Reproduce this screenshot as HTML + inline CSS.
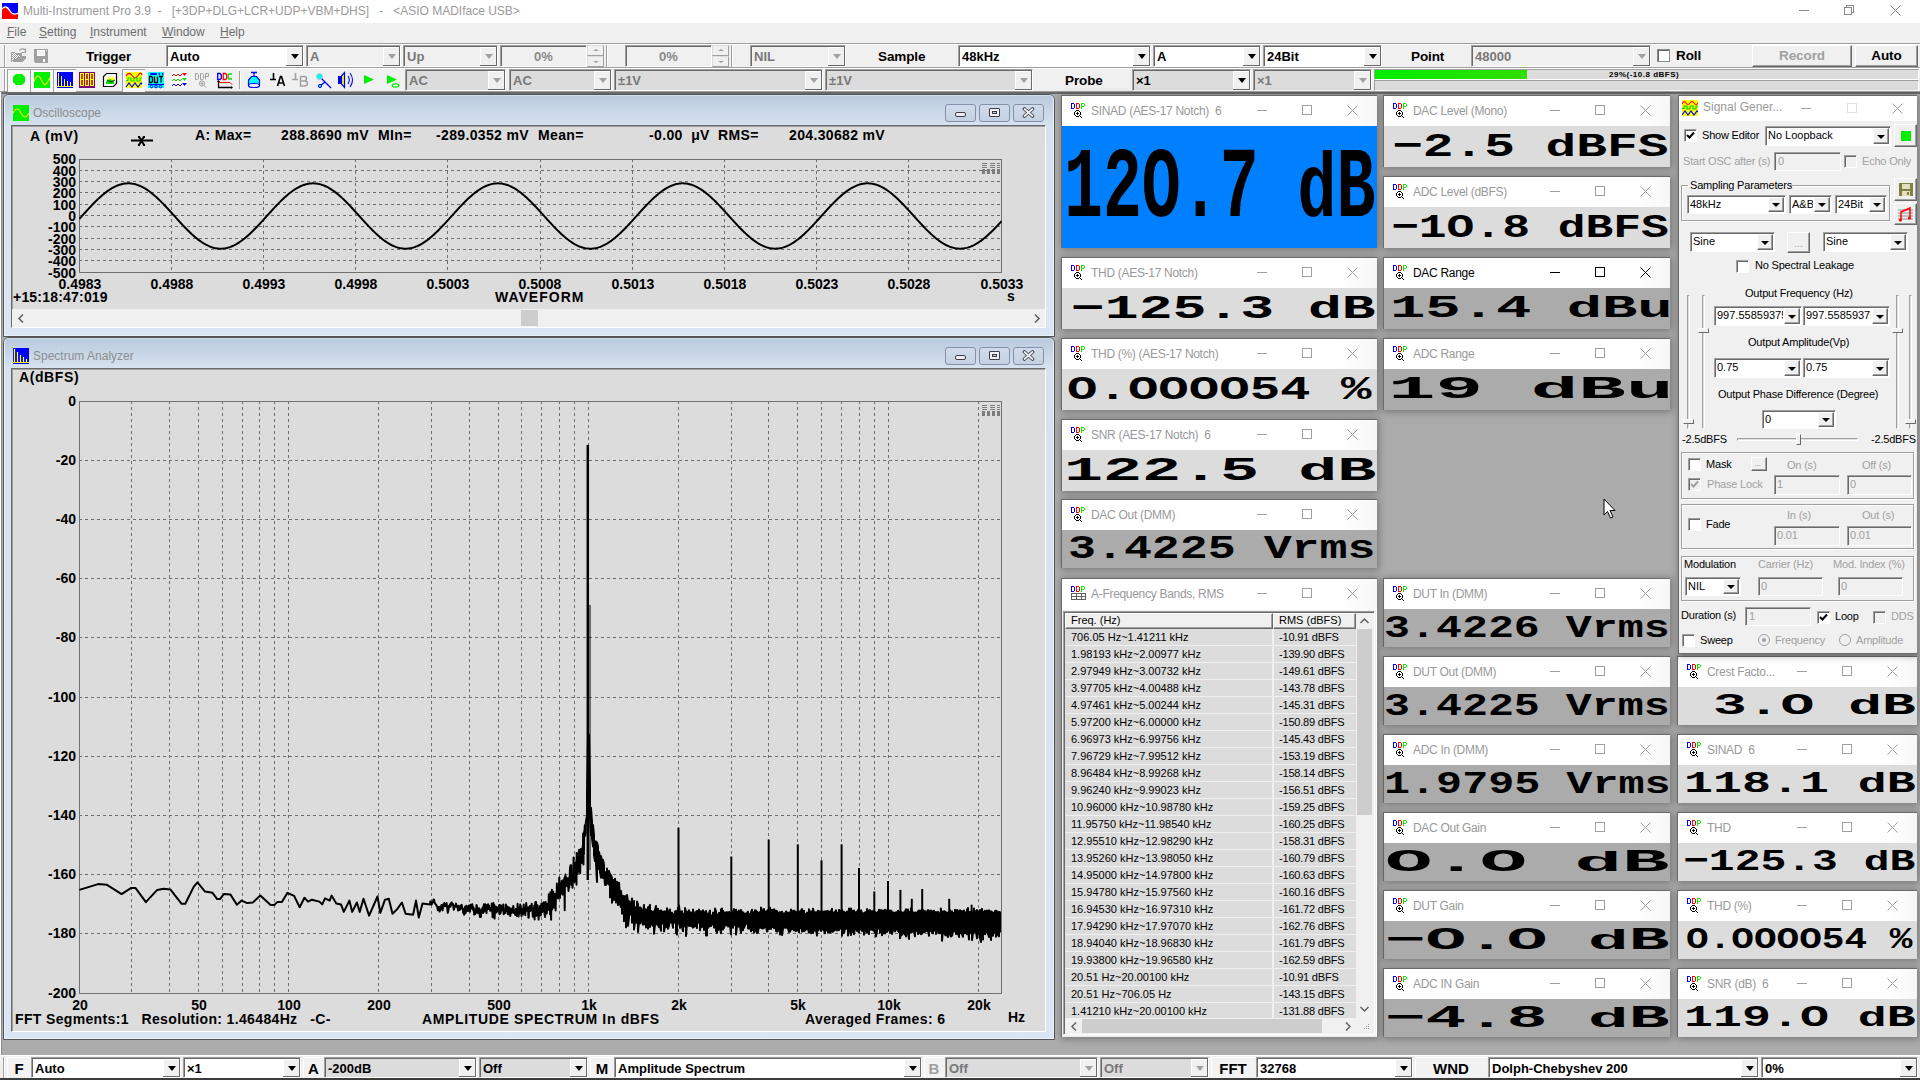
<!DOCTYPE html><html><head><meta charset="utf-8"><style>
*{box-sizing:border-box;margin:0;padding:0}
html,body{width:1920px;height:1080px;overflow:hidden;background:#ababab;font-family:"Liberation Sans",sans-serif;}
.abs{position:absolute}
.t{position:absolute;white-space:nowrap;line-height:1}
.b{font-weight:bold}
.cb{position:absolute;background:#fff;border-top:1px solid #a0a0a0;border-left:1px solid #a0a0a0;border-bottom:1px solid #fff;border-right:1px solid #fff;box-shadow:inset 1px 1px 0 #696969}
.cbg{background:#dcdcdc}
.arr{position:absolute;top:1px;bottom:0;right:0;width:17px;background:#f0f0f0;border-right:1px solid #696969;border-bottom:1px solid #696969;box-shadow:inset 1px 1px 0 #fff}
.arr:after{content:"";position:absolute;left:4.5px;top:50%;margin-top:-2px;border-left:4px solid transparent;border-right:4px solid transparent;border-top:5px solid #000}
.arr.dis:after{border-top-color:#a0a0a0}
.cbt{position:absolute;left:3px;top:50%;transform:translateY(-50%);font-size:13px;font-weight:bold;white-space:nowrap}
</style></head><body><div class="abs" style="left:0;top:0;width:1920px;height:23px;background:#fff"></div><svg class="abs" style="left:2px;top:3px" width="16" height="16" viewBox="0 0 16 16"><rect width="16" height="16" fill="#0000ff"/><path d="M0 16 L0 6 Q4 1 8 8 Q11 13 16 10 L16 16Z" fill="#ff0000"/><path d="M0 6 Q4 1 8 8 Q11 13 16 10" stroke="#fff" stroke-width="1.3" fill="none"/></svg><div class="t" style="left:23px;top:5px;font-size:12px;color:#9a9a9a">Multi-Instrument Pro 3.9&nbsp;&nbsp;-&nbsp;&nbsp;&nbsp;[+3DP+DLG+LCR+UDP+VBM+DHS]&nbsp;&nbsp;&nbsp;-&nbsp;&nbsp;&nbsp;&lt;ASIO MADIface USB&gt;</div><div class="abs" style="left:1799px;top:10px;width:10px;height:1px;background:#8a8a8a"></div><svg class="abs" style="left:1844px;top:5px" width="12" height="12" shape-rendering="crispEdges"><rect x="0.5" y="2.5" width="7" height="7" fill="none" stroke="#8a8a8a"/><path d="M2.5 2.5 V0.5 H9.5 V7.5 H7.5" fill="none" stroke="#8a8a8a"/></svg><svg class="abs" style="left:1890px;top:5px" width="12" height="12"><path d="M0.5 0.5 L10.5 10.5 M10.5 0.5 L0.5 10.5" stroke="#8a8a8a" stroke-width="1"/></svg><div class="abs" style="left:0;top:23px;width:1920px;height:20px;background:#f0f0f0"></div><div class="t" style="left:7px;top:26px;font-size:12px;color:#6d6d6d"><u>F</u>ile</div><div class="t" style="left:39px;top:26px;font-size:12px;color:#6d6d6d"><u>S</u>etting</div><div class="t" style="left:90px;top:26px;font-size:12px;color:#6d6d6d"><u>I</u>nstrument</div><div class="t" style="left:162px;top:26px;font-size:12px;color:#6d6d6d"><u>W</u>indow</div><div class="t" style="left:220px;top:26px;font-size:12px;color:#6d6d6d"><u>H</u>elp</div><div class="abs" style="left:0;top:43px;width:1920px;height:49px;background:#f0f0f0"></div><div class="abs" style="left:0;top:43px;width:1920px;height:1px;background:#a0a0a0"></div><div class="abs" style="left:0;top:44px;width:1920px;height:1px;background:#fff"></div><div class="abs" style="left:0;top:67px;width:1920px;height:1px;background:#a0a0a0"></div><div class="abs" style="left:0;top:68px;width:1920px;height:1px;background:#fff"></div><div class="abs" style="left:0;top:91px;width:1920px;height:1px;background:#a0a0a0"></div><div class="abs" style="left:0;top:92px;width:1920px;height:2px;background:#696969"></div><div class="abs" style="left:4px;top:45px;width:2px;height:22px;border-left:1px solid #a0a0a0;border-right:1px solid #fff"></div><div class="abs" style="left:4px;top:69px;width:2px;height:22px;border-left:1px solid #a0a0a0;border-right:1px solid #fff"></div><svg class="abs" style="left:0;top:42px" width="60" height="26" viewBox="0 42 60 26" shape-rendering="crispEdges"><path d="M11 52 H15 V53 H22 V56 H26 V58 L22 62 H11Z" fill="#a0a0a0"/><rect x="12" y="53" width="1" height="1" fill="#fff"/><rect x="14" y="53" width="1" height="1" fill="#fff"/><rect x="13" y="54" width="1" height="1" fill="#fff"/><rect x="15" y="54" width="1" height="1" fill="#fff"/><rect x="12" y="55" width="1" height="1" fill="#fff"/><rect x="14" y="55" width="1" height="1" fill="#fff"/><rect x="16" y="55" width="1" height="1" fill="#fff"/><rect x="18" y="55" width="1" height="1" fill="#fff"/><rect x="13" y="56" width="1" height="1" fill="#fff"/><rect x="15" y="56" width="1" height="1" fill="#fff"/><rect x="17" y="56" width="1" height="1" fill="#fff"/><rect x="19" y="56" width="1" height="1" fill="#fff"/><rect x="12" y="57" width="1" height="1" fill="#fff"/><rect x="14" y="57" width="1" height="1" fill="#fff"/><rect x="16" y="57" width="1" height="1" fill="#fff"/><rect x="12" y="59" width="1" height="1" fill="#fff"/><rect x="13" y="58" width="1" height="1" fill="#fff"/><rect x="15" y="58" width="1" height="1" fill="#fff"/><rect x="12" y="61" width="1" height="1" fill="#fff"/><path d="M19.5 50.5 Q22 47.5 25 50 M25.5 48.5 V52.5 H21.5" stroke="#a0a0a0" fill="none" stroke-width="1.2" shape-rendering="auto"/><path d="M34 49 H48 V63 H35 L34 62Z" fill="#a0a0a0"/><rect x="37" y="50" width="8" height="6" fill="#fff"/><rect x="38" y="51" width="6" height="4" fill="#f0f0f0"/><rect x="43" y="59" width="2" height="3" fill="#fff"/><rect x="46" y="50" width="1" height="1" fill="#fff"/></svg><div class="t b" style="left:86px;top:50px;font-size:13.5px;letter-spacing:-0.1px;color:#000">Trigger</div><div class="cb" style="left:166px;top:45px;width:138px;height:22px;background:#fff"><div class="cbt" style="color:#000;font-weight:bold;font-size:13px">Auto</div><div class="arr"></div></div><div class="cb" style="left:306px;top:45px;width:95px;height:22px;background:#f0f0f0"><div class="cbt" style="color:#787878;font-weight:bold;font-size:13px">A</div><div class="arr dis"></div></div><div class="cb" style="left:403px;top:45px;width:95px;height:22px;background:#f0f0f0"><div class="cbt" style="color:#787878;font-weight:bold;font-size:13px">Up</div><div class="arr dis"></div></div><div class="cb" style="left:500px;top:45px;width:87px;height:22px;background:#f0f0f0"><div class="t b" style="left:0;width:85px;text-align:center;top:4px;font-size:13px;color:#8a8a8a">0%</div></div><div class="abs" style="left:587px;top:45px;width:17px;height:11px;background:#f0f0f0;border:1px solid #dcdcdc;border-right-color:#a0a0a0;border-bottom-color:#a0a0a0"></div><div class="abs" style="left:587px;top:56px;width:17px;height:11px;background:#f0f0f0;border:1px solid #dcdcdc;border-right-color:#a0a0a0;border-bottom-color:#a0a0a0"></div><div class="abs" style="left:593px;top:49px;border-left:3px solid transparent;border-right:3px solid transparent;border-bottom:2px solid #a0a0a0"></div><div class="abs" style="left:593px;top:61px;border-left:3px solid transparent;border-right:3px solid transparent;border-top:2px solid #a0a0a0"></div><div class="abs" style="left:606px;top:45px;width:2px;height:22px;border-left:1px solid #a0a0a0;border-right:1px solid #fff"></div><div class="cb" style="left:625px;top:45px;width:87px;height:22px;background:#f0f0f0"><div class="t b" style="left:0;width:85px;text-align:center;top:4px;font-size:13px;color:#8a8a8a">0%</div></div><div class="abs" style="left:712px;top:45px;width:17px;height:11px;background:#f0f0f0;border:1px solid #dcdcdc;border-right-color:#a0a0a0;border-bottom-color:#a0a0a0"></div><div class="abs" style="left:712px;top:56px;width:17px;height:11px;background:#f0f0f0;border:1px solid #dcdcdc;border-right-color:#a0a0a0;border-bottom-color:#a0a0a0"></div><div class="abs" style="left:718px;top:49px;border-left:3px solid transparent;border-right:3px solid transparent;border-bottom:2px solid #a0a0a0"></div><div class="abs" style="left:718px;top:61px;border-left:3px solid transparent;border-right:3px solid transparent;border-top:2px solid #a0a0a0"></div><div class="abs" style="left:731px;top:45px;width:2px;height:22px;border-left:1px solid #a0a0a0;border-right:1px solid #fff"></div><div class="cb" style="left:750px;top:45px;width:96px;height:22px;background:#f0f0f0"><div class="cbt" style="color:#787878;font-weight:bold;font-size:13px">NIL</div><div class="arr dis"></div></div><div class="t b" style="left:878px;top:50px;font-size:13.5px;letter-spacing:-0.1px">Sample</div><div class="cb" style="left:958px;top:45px;width:193px;height:22px;background:#fff"><div class="cbt" style="color:#000;font-weight:bold;font-size:13px">48kHz</div><div class="arr"></div></div><div class="cb" style="left:1153px;top:45px;width:108px;height:22px;background:#fff"><div class="cbt" style="color:#000;font-weight:bold;font-size:13px">A</div><div class="arr"></div></div><div class="cb" style="left:1263px;top:45px;width:119px;height:22px;background:#fff"><div class="cbt" style="color:#000;font-weight:bold;font-size:13px">24Bit</div><div class="arr"></div></div><div class="t b" style="left:1411px;top:50px;font-size:13.5px;letter-spacing:-0.1px">Point</div><div class="cb" style="left:1471px;top:45px;width:180px;height:22px;background:#f0f0f0"><div class="cbt" style="color:#787878;font-weight:bold;font-size:13px">48000</div><div class="arr dis"></div></div><div class="abs" style="left:1657px;top:49px;width:13px;height:13px;background:#fff;border:1px solid #8a8a8a;box-shadow:inset 1px 1px 0 #696969"></div><div class="t b" style="left:1676px;top:49px;font-size:13.5px;letter-spacing:-0.1px">Roll</div><div class="abs" style="left:1752px;top:45px;width:100px;height:22px;background:#f0f0f0;border:1px solid #fff;border-right-color:#696969;border-bottom-color:#696969;box-shadow:inset -1px -1px 0 #a0a0a0"></div><div class="t b" style="left:1752px;width:100px;text-align:center;top:49px;font-size:13.5px;letter-spacing:-0.1px;color:#a0a0a0">Record</div><div class="abs" style="left:1855px;top:45px;width:63px;height:22px;background:#f0f0f0;border:1px solid #fff;border-right-color:#696969;border-bottom-color:#696969;box-shadow:inset -1px -1px 0 #a0a0a0"></div><div class="t b" style="left:1855px;width:63px;text-align:center;top:49px;font-size:13.5px;letter-spacing:-0.1px;color:#000">Auto</div><div class="abs" style="left:7px;top:69px;width:23px;height:23px;background:#f7f7f7;border-left:1px solid #a0a0a0;border-top:1px solid #a0a0a0"></div><div class="abs" style="left:30px;top:69px;width:23px;height:23px;background:#f7f7f7;border-left:1px solid #a0a0a0;border-top:1px solid #a0a0a0"></div><div class="abs" style="left:53px;top:69px;width:23px;height:23px;background:#f7f7f7;border-left:1px solid #a0a0a0;border-top:1px solid #a0a0a0"></div><div class="abs" style="left:122px;top:69px;width:23px;height:23px;background:#f7f7f7;border-left:1px solid #a0a0a0;border-top:1px solid #a0a0a0"></div><svg class="abs" style="left:0;top:66px" width="410" height="28" viewBox="0 66 410 28"><polygon points="16,74 22,74 25,77 25,82 22,85 16,85 13,82 13,77" fill="#00ee00"/><rect x="34" y="72" width="16" height="16" fill="#00ee00"/><polyline points="34.0,81.16 34.5,80.20 35.0,79.24 35.5,78.33 36.0,77.52 36.5,76.84 37.0,76.33 37.5,76.01 38.0,75.90 38.5,76.01 39.0,76.33 39.5,76.84 40.0,77.52 40.5,78.34 41.0,79.24 41.5,80.20 42.0,81.16 42.5,82.07 43.0,82.88 43.5,83.56 44.0,84.07 44.5,84.39 45.0,84.50 45.5,84.39 46.0,84.07 46.5,83.56 47.0,82.88 47.5,82.06 48.0,81.16 48.5,80.20 49.0,79.24 49.5,78.33 50.0,77.52" fill="none" stroke="#eeee00" stroke-width="1.1"/><rect x="57" y="72" width="16" height="16" fill="#0000ff"/><g fill="#ffff00"><rect x="58" y="73" width="1" height="13"/><rect x="61" y="76" width="1" height="10"/><rect x="64" y="79" width="1" height="7"/><rect x="67" y="81" width="1" height="5"/><rect x="70" y="82" width="1" height="4"/><rect x="57" y="86" width="16" height="1"/></g><rect x="79" y="72" width="16" height="16" fill="#800080"/><g fill="none" stroke="#ffff00" stroke-width="1"><rect x="80.5" y="73.5" width="3" height="6"/><rect x="80.5" y="79.5" width="3" height="6"/></g><rect x="81" y="74" width="2" height="5" fill="#c04000"/><rect x="81" y="80" width="2" height="5" fill="#c04000"/><g fill="none" stroke="#ffff00" stroke-width="1"><rect x="85.5" y="73.5" width="3" height="6"/><rect x="85.5" y="79.5" width="3" height="6"/></g><rect x="86" y="74" width="2" height="5" fill="#c04000"/><rect x="86" y="80" width="2" height="5" fill="#c04000"/><g fill="none" stroke="#ffff00" stroke-width="1"><rect x="90.5" y="73.5" width="3" height="6"/><rect x="90.5" y="79.5" width="3" height="6"/></g><rect x="91" y="74" width="2" height="5" fill="#c04000"/><rect x="91" y="80" width="2" height="5" fill="#c04000"/><path d="M106.5 73.5 H116.5 V83.5 L113.5 86.5 H103.5 V76.5Z" fill="#fff" stroke="#000" stroke-width="1.2"/><path d="M107 80 L109 76 L111 79 L113 76 L115 80 L111 82Z" fill="#ffff00"/><path d="M106 84 V81 L110 79 L114 81 V84Z" fill="#00dd00"/><path d="M107 80 L111 82 L115 80" stroke="#000" fill="none" stroke-width="0.8"/><rect x="126" y="72" width="16" height="16" fill="#ffff00"/><path d="M126 76 Q129 71 132 75.5 T138 75.5 T142 75" stroke="#ff0000" stroke-width="1.2" fill="none"/><path d="M126 80.5 H128 V78 H131 V81 H134 V78 H137 V81 H140 V78 H142" stroke="#00dd00" stroke-width="1.2" fill="none"/><path d="M126 87 L129 83 L132 87 L135 83 L138 87 L141 83 L142 84" stroke="#0000ff" stroke-width="1.2" fill="none"/><rect x="148" y="72" width="16" height="16" fill="#00ffff"/><rect x="150" y="73" width="7" height="2" rx="1" fill="#0000ff"/><path d="M158 74 L160 72.5 V75.5Z M164 74 L162 72.5 V75.5Z" fill="#0000ff"/><path d="M149.5 76.5 V82.5 H151.5 L152.5 81.5 V77.5 L151.5 76.5Z M154.5 76.5 V82.5 H157.5 V76.5 M159 76.5 H163 M161 76.5 V82.5" stroke="#000" stroke-width="1.3" fill="none"/><rect x="148" y="84" width="16" height="1" fill="#0000ff"/><g fill="none" stroke="#0000ff" stroke-width="1"><ellipse cx="151.5" cy="86.5" rx="1.3" ry="1.3"/><ellipse cx="156" cy="86.5" rx="1.3" ry="1.3"/><ellipse cx="160.5" cy="86.5" rx="1.3" ry="1.3"/></g><rect x="171" y="72" width="16" height="16" fill="#fff"/><path d="M172 76 L174 74 L176 76 L178 74 L180 76 L182 74" stroke="#ff0000" fill="none" stroke-width="1"/><path d="M182 73 H187 L184.5 76Z" fill="#ff0000"/><path d="M172 81 L174 79 L176 81 L178 79 L180 81 L182 79" stroke="#00dd00" fill="none" stroke-width="1"/><path d="M182 78 H187 L184.5 81Z" fill="#00dd00"/><path d="M172 86 L174 84 L176 86 L178 84 L180 86 L182 84" stroke="#0000ff" fill="none" stroke-width="1"/><path d="M182 83 H187 L184.5 86Z" fill="#0000ff"/><g fill="none" stroke="#a0a0a0" stroke-width="1"><path d="M195.5 73.5 H197.5 L198.5 74.5 V78.5 L197.5 79.5 H195.5Z M200.5 73.5 H202.5 L203.5 74.5 V78.5 L202.5 79.5 H200.5Z M205.5 79.5 V73.5 H208.5 V76.5 H205.5"/><circle cx="202" cy="83.5" r="2.6"/><path d="M204 85.5 L206 87.5 M200.5 83.5 H203.5 M202 82 V85"/></g><g fill="none" stroke-width="1.3"><path d="M217.7 73.5 H220 L221.3 74.8 V78.2 L220 79.5 H217.7Z" stroke="#0000ff"/><path d="M223.2 73.5 H225.5 L226.8 74.8 V78.2 L225.5 79.5 H223.2Z" stroke="#ff0000"/><path d="M232 74 H229 L228.3 74.8 V78.2 L229 79 H232" stroke="#00dd00"/></g><path d="M218.5 81 V87.5 H231" stroke="#000" stroke-width="1.3" fill="none"/><path d="M217 82 L218.5 80 L220 82 Z M231 86 L233 87.5 L231 89Z" fill="#000"/><path d="M219 82.5 H230 L232 84.5" stroke="#ff0000" stroke-width="1" fill="none"/><rect x="239" y="71" width="1" height="18" fill="#a0a0a0"/><rect x="240" y="71" width="1" height="18" fill="#fff"/><path d="M251 72.5 H257 M254 72.5 V76" stroke="#0000ff" stroke-width="1.3"/><path d="M251.5 76.5 H256.5 L259.5 80 V85.5 H248.5 V80Z" fill="#00ffff" stroke="#0000ff" stroke-width="1.2"/><ellipse cx="254" cy="85.5" rx="5.5" ry="2" fill="#fff" stroke="#0000ff" stroke-width="1.2"/><path d="M270 79.5 H276 M273.5 73 V79.5" stroke="#000" stroke-width="1.6"/><path d="M277.5 86 L280.5 76.5 H281.5 L284.5 86 M278.5 83 H283.5" stroke="#000" stroke-width="1.6" fill="none"/><path d="M292 79.5 H298 M295.5 73 V79.5" stroke="#a0a0a0" stroke-width="1.6"/><path d="M300.5 76.5 H304.5 Q306.5 76.5 306.5 78.8 Q306.5 81 304.5 81 H300.5 M304.5 81 Q307.5 81 307.5 83.5 Q307.5 86 304.5 86 H300.5 V76.5" stroke="#a0a0a0" stroke-width="1.5" fill="none"/><path d="M320 77 L331 88 M325 82 L320 86" stroke="#0000ff" stroke-width="1.3"/><circle cx="319.5" cy="76.5" r="3" fill="#00ffff" stroke="#e0a0a0" stroke-width="0.6"/><circle cx="320" cy="86" r="1.6" fill="#00ffff" stroke="#0000ff" stroke-width="1"/><rect x="338" y="76" width="3" height="8" fill="#0000ff"/><path d="M341.5 76 L344.5 72.5 V87.5 L341.5 84Z" fill="#ffff00" stroke="#0000ff" stroke-width="1.2"/><path d="M348 76 Q350.5 80 348 84 M350 73 Q355 80 350 87" stroke="#0000ff" stroke-width="1.1" fill="none"/><path d="M364 75 L374 79.5 L364 84Z" fill="#00ee00"/><path d="M387 75 L397 79.5 L387 84Z" fill="#00ee00"/><ellipse cx="395.5" cy="85.5" rx="3.3" ry="1.6" fill="none" stroke="#00ee00" stroke-width="1.2"/></svg><div class="cb" style="left:405px;top:69px;width:101px;height:22px;background:#dcdcdc"><div class="cbt" style="color:#787878;font-weight:bold;font-size:13px">AC</div><div class="arr dis"></div></div><div class="cb" style="left:509px;top:69px;width:103px;height:22px;background:#dcdcdc"><div class="cbt" style="color:#787878;font-weight:bold;font-size:13px">AC</div><div class="arr dis"></div></div><div class="cb" style="left:614px;top:69px;width:209px;height:22px;background:#dcdcdc"><div class="cbt" style="color:#787878;font-weight:bold;font-size:13px">&plusmn;1V</div><div class="arr dis"></div></div><div class="cb" style="left:825px;top:69px;width:208px;height:22px;background:#dcdcdc"><div class="cbt" style="color:#787878;font-weight:bold;font-size:13px">&plusmn;1V</div><div class="arr dis"></div></div><div class="t b" style="left:1065px;top:74px;font-size:13.5px;letter-spacing:-0.1px">Probe</div><div class="cb" style="left:1132px;top:69px;width:119px;height:22px;background:#dcdcdc"><div class="cbt" style="color:#000;font-weight:bold;font-size:13px">&times;1</div><div class="arr"></div></div><div class="cb" style="left:1253px;top:69px;width:119px;height:22px;background:#dcdcdc"><div class="cbt" style="color:#787878;font-weight:bold;font-size:13px">&times;1</div><div class="arr dis"></div></div><div class="abs" style="left:1374px;top:69px;width:545px;height:11px;background:#dcdcdc;border:1px solid #a0a0a0;border-right-color:#fff;border-bottom-color:#fff"></div><div class="abs" style="left:1375px;top:70px;width:152px;height:9px;background:linear-gradient(90deg,#00ee00,#33dd00)"></div><div class="t b" style="left:1609px;top:71px;font-size:8px;letter-spacing:0.5px">29%(-10.8 dBFS)</div><div class="abs" style="left:1374px;top:80px;width:545px;height:11px;background:#dcdcdc;border:1px solid #a0a0a0;border-right-color:#fff;border-bottom-color:#fff"></div><div class="abs" style="left:0;top:92px;width:2px;height:963px;background:#8a8a8a;border-left:1px solid #fff"></div><div class="abs" style="left:3px;top:94px;width:1052px;height:243px;border:1px solid #555;border-radius:6px 6px 0 0;background:linear-gradient(180deg,#b9cadd 0px,#d6e2ef 30px,#dae6f3 100%)"></div><div class="abs" style="left:4px;top:95px;width:1050px;height:241px;border:1px solid #e8f0f8;border-top-color:#d0dde9;border-radius:5px 5px 0 0"></div><div class="abs" style="left:13px;top:105px;width:16px;height:16px"><svg width="16" height="16"><rect width="16" height="16" fill="#00ee00"/><path d="M0 8 Q4 0 8 8 T16 8" stroke="#eeee00" stroke-width="1.2" fill="none"/></svg></div><div class="t" style="left:33px;top:107px;font-size:12px;color:#8c8c8c">Oscilloscope</div><div class="abs" style="left:945px;top:104px;width:31px;height:18px;border:1px solid #8391a8;border-radius:3px;background:linear-gradient(180deg,#d0dceb,#c3d1e2)"></div><div class="abs" style="left:955px;top:112px;width:11px;height:5px;border-radius:2px;background:#eeeeee;border:1px solid #3c3c4c"></div><div class="abs" style="left:979px;top:104px;width:31px;height:18px;border:1px solid #8391a8;border-radius:3px;background:linear-gradient(180deg,#d0dceb,#c3d1e2)"></div><div class="abs" style="left:989px;top:108px;width:11px;height:9px;border-radius:1px;background:#f0f0f0;border:1px solid #3c3c4c"></div><div class="abs" style="left:992px;top:111px;width:5px;height:3px;background:#c0cedd;border:1px solid #3c3c4c"></div><div class="abs" style="left:1013px;top:104px;width:31px;height:18px;border:1px solid #8391a8;border-radius:3px;background:linear-gradient(180deg,#d0dceb,#c3d1e2)"></div><svg class="abs" style="left:1022px;top:107px" width="13" height="11"><path d="M2.5 2 L10.5 9 M10.5 2 L2.5 9" stroke="#3c3c4c" stroke-width="3.6" stroke-linecap="round"/><path d="M2.5 2 L10.5 9 M10.5 2 L2.5 9" stroke="#f0f0f0" stroke-width="1.8" stroke-linecap="round"/></svg><div class="abs" style="left:11px;top:125px;width:1035px;height:203px;background:#dcdcdc;border-top:1px solid #696969;border-left:1px solid #696969;border-right:1px solid #fff;border-bottom:1px solid #fff;box-shadow:inset 1px 1px 0 #a0a0a0"></div><svg class="abs" style="left:0;top:0" width="1060" height="340"><line x1="79.5" y1="170.5" x2="1001.5" y2="170.5" stroke="#6e6e6e" stroke-dasharray="3,3" stroke-dashoffset="1" stroke-width="1" shape-rendering="crispEdges"/><line x1="79.5" y1="181.5" x2="1001.5" y2="181.5" stroke="#6e6e6e" stroke-dasharray="3,3" stroke-dashoffset="1" stroke-width="1" shape-rendering="crispEdges"/><line x1="79.5" y1="192.5" x2="1001.5" y2="192.5" stroke="#6e6e6e" stroke-dasharray="3,3" stroke-dashoffset="1" stroke-width="1" shape-rendering="crispEdges"/><line x1="79.5" y1="204.5" x2="1001.5" y2="204.5" stroke="#6e6e6e" stroke-dasharray="3,3" stroke-dashoffset="1" stroke-width="1" shape-rendering="crispEdges"/><line x1="79.5" y1="215.5" x2="1001.5" y2="215.5" stroke="#6e6e6e" stroke-dasharray="3,3" stroke-dashoffset="1" stroke-width="1" shape-rendering="crispEdges"/><line x1="79.5" y1="226.5" x2="1001.5" y2="226.5" stroke="#6e6e6e" stroke-dasharray="3,3" stroke-dashoffset="1" stroke-width="1" shape-rendering="crispEdges"/><line x1="79.5" y1="238.5" x2="1001.5" y2="238.5" stroke="#6e6e6e" stroke-dasharray="3,3" stroke-dashoffset="1" stroke-width="1" shape-rendering="crispEdges"/><line x1="79.5" y1="249.5" x2="1001.5" y2="249.5" stroke="#6e6e6e" stroke-dasharray="3,3" stroke-dashoffset="1" stroke-width="1" shape-rendering="crispEdges"/><line x1="79.5" y1="260.5" x2="1001.5" y2="260.5" stroke="#6e6e6e" stroke-dasharray="3,3" stroke-dashoffset="1" stroke-width="1" shape-rendering="crispEdges"/><line x1="171.5" y1="159.5" x2="171.5" y2="272.5" stroke="#6e6e6e" stroke-dasharray="3,3" stroke-dashoffset="1" stroke-width="1" shape-rendering="crispEdges"/><line x1="263.5" y1="159.5" x2="263.5" y2="272.5" stroke="#6e6e6e" stroke-dasharray="3,3" stroke-dashoffset="1" stroke-width="1" shape-rendering="crispEdges"/><line x1="355.5" y1="159.5" x2="355.5" y2="272.5" stroke="#6e6e6e" stroke-dasharray="3,3" stroke-dashoffset="1" stroke-width="1" shape-rendering="crispEdges"/><line x1="447.5" y1="159.5" x2="447.5" y2="272.5" stroke="#6e6e6e" stroke-dasharray="3,3" stroke-dashoffset="1" stroke-width="1" shape-rendering="crispEdges"/><line x1="540.5" y1="159.5" x2="540.5" y2="272.5" stroke="#6e6e6e" stroke-dasharray="3,3" stroke-dashoffset="1" stroke-width="1" shape-rendering="crispEdges"/><line x1="632.5" y1="159.5" x2="632.5" y2="272.5" stroke="#6e6e6e" stroke-dasharray="3,3" stroke-dashoffset="1" stroke-width="1" shape-rendering="crispEdges"/><line x1="724.5" y1="159.5" x2="724.5" y2="272.5" stroke="#6e6e6e" stroke-dasharray="3,3" stroke-dashoffset="1" stroke-width="1" shape-rendering="crispEdges"/><line x1="816.5" y1="159.5" x2="816.5" y2="272.5" stroke="#6e6e6e" stroke-dasharray="3,3" stroke-dashoffset="1" stroke-width="1" shape-rendering="crispEdges"/><line x1="908.5" y1="159.5" x2="908.5" y2="272.5" stroke="#6e6e6e" stroke-dasharray="3,3" stroke-dashoffset="1" stroke-width="1" shape-rendering="crispEdges"/><rect x="79.5" y="159.5" width="922" height="113" fill="none" stroke="#707070"/><polyline points="79.5,218.77 80.5,217.66 81.5,216.55 82.5,215.45 83.5,214.34 84.5,213.23 85.5,212.12 86.5,211.02 87.5,209.93 88.5,208.84 89.5,207.76 90.5,206.70 91.5,205.64 92.5,204.59 93.5,203.56 94.5,202.54 95.5,201.53 96.5,200.55 97.5,199.58 98.5,198.63 99.5,197.70 100.5,196.79 101.5,195.90 102.5,195.04 103.5,194.20 104.5,193.39 105.5,192.60 106.5,191.84 107.5,191.11 108.5,190.40 109.5,189.73 110.5,189.09 111.5,188.47 112.5,187.89 113.5,187.34 114.5,186.83 115.5,186.34 116.5,185.90 117.5,185.48 118.5,185.11 119.5,184.76 120.5,184.46 121.5,184.19 122.5,183.96 123.5,183.76 124.5,183.60 125.5,183.48 126.5,183.40 127.5,183.35 128.5,183.34 129.5,183.37 130.5,183.44 131.5,183.55 132.5,183.69 133.5,183.87 134.5,184.09 135.5,184.34 136.5,184.63 137.5,184.96 138.5,185.32 139.5,185.72 140.5,186.15 141.5,186.62 142.5,187.12 143.5,187.65 144.5,188.22 145.5,188.82 146.5,189.45 147.5,190.11 148.5,190.80 149.5,191.53 150.5,192.27 151.5,193.05 152.5,193.85 153.5,194.68 154.5,195.54 155.5,196.41 156.5,197.31 157.5,198.23 158.5,199.17 159.5,200.13 160.5,201.11 161.5,202.11 162.5,203.12 163.5,204.15 164.5,205.19 165.5,206.24 166.5,207.31 167.5,208.38 168.5,209.47 169.5,210.56 170.5,211.66 171.5,212.76 172.5,213.86 173.5,214.97 174.5,216.08 175.5,217.19 176.5,218.30 177.5,219.41 178.5,220.51 179.5,221.61 180.5,222.70 181.5,223.78 182.5,224.85 183.5,225.91 184.5,226.97 185.5,228.01 186.5,229.03 187.5,230.04 188.5,231.03 189.5,232.01 190.5,232.97 191.5,233.91 192.5,234.83 193.5,235.72 194.5,236.59 195.5,237.44 196.5,238.27 197.5,239.07 198.5,239.84 199.5,240.58 200.5,241.30 201.5,241.99 202.5,242.64 203.5,243.27 204.5,243.87 205.5,244.43 206.5,244.96 207.5,245.45 208.5,245.92 209.5,246.34 210.5,246.74 211.5,247.09 212.5,247.42 213.5,247.70 214.5,247.95 215.5,248.16 216.5,248.33 217.5,248.47 218.5,248.57 219.5,248.63 220.5,248.66 221.5,248.64 222.5,248.59 223.5,248.50 224.5,248.38 225.5,248.21 226.5,248.01 227.5,247.77 228.5,247.50 229.5,247.19 230.5,246.84 231.5,246.46 232.5,246.04 233.5,245.59 234.5,245.10 235.5,244.58 236.5,244.02 237.5,243.44 238.5,242.82 239.5,242.17 240.5,241.49 241.5,240.78 242.5,240.05 243.5,239.28 244.5,238.49 245.5,237.67 246.5,236.83 247.5,235.96 248.5,235.07 249.5,234.16 250.5,233.23 251.5,232.28 252.5,231.30 253.5,230.32 254.5,229.31 255.5,228.29 256.5,227.25 257.5,226.20 258.5,225.14 259.5,224.07 260.5,222.99 261.5,221.91 262.5,220.81 263.5,219.71 264.5,218.61 265.5,217.50 266.5,216.39 267.5,215.28 268.5,214.17 269.5,213.06 270.5,211.96 271.5,210.86 272.5,209.77 273.5,208.68 274.5,207.60 275.5,206.54 276.5,205.48 277.5,204.43 278.5,203.40 279.5,202.39 280.5,201.39 281.5,200.40 282.5,199.44 283.5,198.49 284.5,197.56 285.5,196.66 286.5,195.77 287.5,194.91 288.5,194.08 289.5,193.27 290.5,192.49 291.5,191.73 292.5,191.00 293.5,190.30 294.5,189.63 295.5,188.99 296.5,188.38 297.5,187.81 298.5,187.26 299.5,186.75 300.5,186.28 301.5,185.83 302.5,185.43 303.5,185.05 304.5,184.72 305.5,184.42 306.5,184.15 307.5,183.92 308.5,183.73 309.5,183.58 310.5,183.47 311.5,183.39 312.5,183.35 313.5,183.35 314.5,183.38 315.5,183.46 316.5,183.57 317.5,183.71 318.5,183.90 319.5,184.12 320.5,184.38 321.5,184.68 322.5,185.01 323.5,185.38 324.5,185.78 325.5,186.22 326.5,186.69 327.5,187.20 328.5,187.74 329.5,188.31 330.5,188.91 331.5,189.55 332.5,190.22 333.5,190.91 334.5,191.64 335.5,192.39 336.5,193.17 337.5,193.98 338.5,194.81 339.5,195.67 340.5,196.55 341.5,197.45 342.5,198.37 343.5,199.32 344.5,200.28 345.5,201.26 346.5,202.26 347.5,203.28 348.5,204.30 349.5,205.35 350.5,206.40 351.5,207.47 352.5,208.55 353.5,209.63 354.5,210.72 355.5,211.82 356.5,212.92 357.5,214.03 358.5,215.14 359.5,216.25 360.5,217.36 361.5,218.47 362.5,219.57 363.5,220.67 364.5,221.77 365.5,222.86 366.5,223.94 367.5,225.01 368.5,226.07 369.5,227.12 370.5,228.16 371.5,229.18 372.5,230.19 373.5,231.18 374.5,232.16 375.5,233.11 376.5,234.05 377.5,234.96 378.5,235.85 379.5,236.72 380.5,237.57 381.5,238.39 382.5,239.19 383.5,239.95 384.5,240.69 385.5,241.41 386.5,242.09 387.5,242.74 388.5,243.36 389.5,243.95 390.5,244.51 391.5,245.03 392.5,245.53 393.5,245.98 394.5,246.41 395.5,246.79 396.5,247.14 397.5,247.46 398.5,247.74 399.5,247.98 400.5,248.19 401.5,248.36 402.5,248.49 403.5,248.58 404.5,248.64 405.5,248.66 406.5,248.64 407.5,248.58 408.5,248.49 409.5,248.35 410.5,248.18 411.5,247.98 412.5,247.73 413.5,247.45 414.5,247.14 415.5,246.78 416.5,246.40 417.5,245.97 418.5,245.51 419.5,245.02 420.5,244.50 421.5,243.94 422.5,243.35 423.5,242.72 424.5,242.07 425.5,241.39 426.5,240.68 427.5,239.93 428.5,239.17 429.5,238.37 430.5,237.55 431.5,236.70 432.5,235.83 433.5,234.94 434.5,234.02 435.5,233.09 436.5,232.13 437.5,231.16 438.5,230.17 439.5,229.16 440.5,228.13 441.5,227.10 442.5,226.05 443.5,224.98 444.5,223.91 445.5,222.83 446.5,221.74 447.5,220.65 448.5,219.55 449.5,218.44 450.5,217.33 451.5,216.22 452.5,215.11 453.5,214.00 454.5,212.90 455.5,211.79 456.5,210.70 457.5,209.60 458.5,208.52 459.5,207.44 460.5,206.38 461.5,205.32 462.5,204.28 463.5,203.25 464.5,202.24 465.5,201.24 466.5,200.26 467.5,199.29 468.5,198.35 469.5,197.42 470.5,196.52 471.5,195.64 472.5,194.79 473.5,193.96 474.5,193.15 475.5,192.37 476.5,191.62 477.5,190.89 478.5,190.20 479.5,189.53 480.5,188.90 481.5,188.29 482.5,187.72 483.5,187.18 484.5,186.68 485.5,186.21 486.5,185.77 487.5,185.37 488.5,185.00 489.5,184.67 490.5,184.37 491.5,184.12 492.5,183.89 493.5,183.71 494.5,183.56 495.5,183.45 496.5,183.38 497.5,183.35 498.5,183.35 499.5,183.39 500.5,183.47 501.5,183.59 502.5,183.74 503.5,183.93 504.5,184.16 505.5,184.42 506.5,184.72 507.5,185.06 508.5,185.44 509.5,185.84 510.5,186.29 511.5,186.76 512.5,187.28 513.5,187.82 514.5,188.40 515.5,189.01 516.5,189.65 517.5,190.32 518.5,191.02 519.5,191.75 520.5,192.50 521.5,193.29 522.5,194.10 523.5,194.94 524.5,195.80 525.5,196.68 526.5,197.59 527.5,198.51 528.5,199.46 529.5,200.43 530.5,201.41 531.5,202.41 532.5,203.43 533.5,204.46 534.5,205.51 535.5,206.56 536.5,207.63 537.5,208.71 538.5,209.79 539.5,210.89 540.5,211.99 541.5,213.09 542.5,214.20 543.5,215.31 544.5,216.42 545.5,217.53 546.5,218.63 547.5,219.74 548.5,220.84 549.5,221.93 550.5,223.02 551.5,224.10 552.5,225.17 553.5,226.23 554.5,227.28 555.5,228.31 556.5,229.34 557.5,230.34 558.5,231.33 559.5,232.30 560.5,233.25 561.5,234.19 562.5,235.10 563.5,235.99 564.5,236.85 565.5,237.69 566.5,238.51 567.5,239.30 568.5,240.07 569.5,240.80 570.5,241.51 571.5,242.19 572.5,242.84 573.5,243.45 574.5,244.04 575.5,244.59 576.5,245.11 577.5,245.60 578.5,246.05 579.5,246.47 580.5,246.85 581.5,247.19 582.5,247.51 583.5,247.78 584.5,248.02 585.5,248.22 586.5,248.38 587.5,248.51 588.5,248.59 589.5,248.64 590.5,248.66 591.5,248.63 592.5,248.57 593.5,248.47 594.5,248.33 595.5,248.16 596.5,247.94 597.5,247.69 598.5,247.41 599.5,247.09 600.5,246.73 601.5,246.33 602.5,245.91 603.5,245.44 604.5,244.95 605.5,244.41 606.5,243.85 607.5,243.26 608.5,242.63 609.5,241.97 610.5,241.28 611.5,240.57 612.5,239.82 613.5,239.05 614.5,238.25 615.5,237.42 616.5,236.57 617.5,235.70 618.5,234.80 619.5,233.88 620.5,232.95 621.5,231.99 622.5,231.01 623.5,230.02 624.5,229.01 625.5,227.98 626.5,226.94 627.5,225.89 628.5,224.82 629.5,223.75 630.5,222.67 631.5,221.58 632.5,220.48 633.5,219.38 634.5,218.27 635.5,217.17 636.5,216.06 637.5,214.95 638.5,213.84 639.5,212.73 640.5,211.63 641.5,210.53 642.5,209.44 643.5,208.36 644.5,207.28 645.5,206.22 646.5,205.16 647.5,204.12 648.5,203.10 649.5,202.08 650.5,201.09 651.5,200.11 652.5,199.15 653.5,198.21 654.5,197.29 655.5,196.39 656.5,195.51 657.5,194.66 658.5,193.83 659.5,193.03 660.5,192.26 661.5,191.51 662.5,190.79 663.5,190.10 664.5,189.44 665.5,188.81 666.5,188.21 667.5,187.64 668.5,187.11 669.5,186.61 670.5,186.14 671.5,185.71 672.5,185.31 673.5,184.95 674.5,184.62 675.5,184.33 676.5,184.08 677.5,183.86 678.5,183.69 679.5,183.54 680.5,183.44 681.5,183.37 682.5,183.34 683.5,183.35 684.5,183.40 685.5,183.48 686.5,183.61 687.5,183.77 688.5,183.96 689.5,184.20 690.5,184.47 691.5,184.77 692.5,185.12 693.5,185.49 694.5,185.91 695.5,186.36 696.5,186.84 697.5,187.36 698.5,187.91 699.5,188.49 700.5,189.10 701.5,189.75 702.5,190.42 703.5,191.13 704.5,191.86 705.5,192.62 706.5,193.41 707.5,194.22 708.5,195.06 709.5,195.93 710.5,196.81 711.5,197.72 712.5,198.65 713.5,199.60 714.5,200.57 715.5,201.56 716.5,202.56 717.5,203.58 718.5,204.62 719.5,205.66 720.5,206.72 721.5,207.79 722.5,208.87 723.5,209.96 724.5,211.05 725.5,212.15 726.5,213.26 727.5,214.36 728.5,215.47 729.5,216.58 730.5,217.69 731.5,218.80 732.5,219.90 733.5,221.00 734.5,222.10 735.5,223.18 736.5,224.26 737.5,225.33 738.5,226.39 739.5,227.44 740.5,228.47 741.5,229.49 742.5,230.49 743.5,231.48 744.5,232.44 745.5,233.39 746.5,234.32 747.5,235.23 748.5,236.12 749.5,236.98 750.5,237.82 751.5,238.63 752.5,239.42 753.5,240.18 754.5,240.91 755.5,241.61 756.5,242.29 757.5,242.93 758.5,243.54 759.5,244.12 760.5,244.67 761.5,245.19 762.5,245.67 763.5,246.11 764.5,246.53 765.5,246.90 766.5,247.24 767.5,247.55 768.5,247.82 769.5,248.05 770.5,248.24 771.5,248.40 772.5,248.52 773.5,248.60 774.5,248.65 775.5,248.66 776.5,248.62 777.5,248.56 778.5,248.45 779.5,248.31 780.5,248.13 781.5,247.91 782.5,247.65 783.5,247.36 784.5,247.03 785.5,246.67 786.5,246.27 787.5,245.84 788.5,245.37 789.5,244.87 790.5,244.33 791.5,243.76 792.5,243.16 793.5,242.53 794.5,241.87 795.5,241.18 796.5,240.46 797.5,239.71 798.5,238.93 799.5,238.13 800.5,237.30 801.5,236.44 802.5,235.57 803.5,234.67 804.5,233.74 805.5,232.80 806.5,231.84 807.5,230.86 808.5,229.86 809.5,228.85 810.5,227.82 811.5,226.78 812.5,225.73 813.5,224.66 814.5,223.59 815.5,222.51 816.5,221.41 817.5,220.32 818.5,219.21 819.5,218.11 820.5,217.00 821.5,215.89 822.5,214.78 823.5,213.67 824.5,212.57 825.5,211.46 826.5,210.37 827.5,209.28 828.5,208.20 829.5,207.12 830.5,206.06 831.5,205.01 832.5,203.97 833.5,202.94 834.5,201.93 835.5,200.94 836.5,199.96 837.5,199.01 838.5,198.07 839.5,197.15 840.5,196.26 841.5,195.38 842.5,194.54 843.5,193.71 844.5,192.91 845.5,192.14 846.5,191.40 847.5,190.68 848.5,190.00 849.5,189.34 850.5,188.71 851.5,188.12 852.5,187.56 853.5,187.03 854.5,186.53 855.5,186.07 856.5,185.65 857.5,185.25 858.5,184.90 859.5,184.58 860.5,184.29 861.5,184.05 862.5,183.83 863.5,183.66 864.5,183.53 865.5,183.43 866.5,183.37 867.5,183.34 868.5,183.36 869.5,183.41 870.5,183.50 871.5,183.63 872.5,183.79 873.5,183.99 874.5,184.23 875.5,184.51 876.5,184.82 877.5,185.17 878.5,185.55 879.5,185.97 880.5,186.43 881.5,186.91 882.5,187.44 883.5,187.99 884.5,188.58 885.5,189.20 886.5,189.85 887.5,190.52 888.5,191.23 889.5,191.97 890.5,192.74 891.5,193.53 892.5,194.35 893.5,195.19 894.5,196.06 895.5,196.95 896.5,197.86 897.5,198.79 898.5,199.75 899.5,200.72 900.5,201.71 901.5,202.72 902.5,203.74 903.5,204.77 904.5,205.82 905.5,206.88 906.5,207.95 907.5,209.03 908.5,210.12 909.5,211.22 910.5,212.32 911.5,213.42 912.5,214.53 913.5,215.64 914.5,216.75 915.5,217.86 916.5,218.97 917.5,220.07 918.5,221.17 919.5,222.26 920.5,223.35 921.5,224.42 922.5,225.49 923.5,226.55 924.5,227.59 925.5,228.62 926.5,229.64 927.5,230.64 928.5,231.62 929.5,232.59 930.5,233.53 931.5,234.46 932.5,235.37 933.5,236.25 934.5,237.11 935.5,237.94 936.5,238.75 937.5,239.53 938.5,240.29 939.5,241.02 940.5,241.72 941.5,242.39 942.5,243.02 943.5,243.63 944.5,244.21 945.5,244.75 946.5,245.26 947.5,245.74 948.5,246.18 949.5,246.58 950.5,246.96 951.5,247.29 952.5,247.59 953.5,247.85 954.5,248.08 955.5,248.27 956.5,248.42 957.5,248.54 958.5,248.61 959.5,248.65 960.5,248.65 961.5,248.62 962.5,248.54 963.5,248.43 964.5,248.28 965.5,248.10 966.5,247.87 967.5,247.61 968.5,247.32 969.5,246.98 970.5,246.61 971.5,246.21 972.5,245.77 973.5,245.30 974.5,244.79 975.5,244.25 976.5,243.68 977.5,243.07 978.5,242.43 979.5,241.77 980.5,241.07 981.5,240.35 982.5,239.59 983.5,238.81 984.5,238.00 985.5,237.17 986.5,236.31 987.5,235.43 988.5,234.53 989.5,233.60 990.5,232.66 991.5,231.70 992.5,230.71 993.5,229.71 994.5,228.70 995.5,227.67 996.5,226.63 997.5,225.57 998.5,224.50 999.5,223.43 1000.5,222.34 1001.5,221.25" fill="none" stroke="#000" stroke-width="2"/></svg><div class="t b" style="left:0;width:76px;text-align:right;top:152px;font-size:14px">500</div><div class="t b" style="left:0;width:76px;text-align:right;top:164px;font-size:14px">400</div><div class="t b" style="left:0;width:76px;text-align:right;top:175px;font-size:14px">300</div><div class="t b" style="left:0;width:76px;text-align:right;top:186px;font-size:14px">200</div><div class="t b" style="left:0;width:76px;text-align:right;top:198px;font-size:14px">100</div><div class="t b" style="left:0;width:76px;text-align:right;top:209px;font-size:14px">0</div><div class="t b" style="left:0;width:76px;text-align:right;top:220px;font-size:14px">-100</div><div class="t b" style="left:0;width:76px;text-align:right;top:232px;font-size:14px">-200</div><div class="t b" style="left:0;width:76px;text-align:right;top:243px;font-size:14px">-300</div><div class="t b" style="left:0;width:76px;text-align:right;top:254px;font-size:14px">-400</div><div class="t b" style="left:0;width:76px;text-align:right;top:266px;font-size:14px">-500</div><div class="t b" style="left:40px;width:80px;text-align:center;top:277px;font-size:14px">0.4983</div><div class="t b" style="left:132px;width:80px;text-align:center;top:277px;font-size:14px">0.4988</div><div class="t b" style="left:224px;width:80px;text-align:center;top:277px;font-size:14px">0.4993</div><div class="t b" style="left:316px;width:80px;text-align:center;top:277px;font-size:14px">0.4998</div><div class="t b" style="left:408px;width:80px;text-align:center;top:277px;font-size:14px">0.5003</div><div class="t b" style="left:500px;width:80px;text-align:center;top:277px;font-size:14px">0.5008</div><div class="t b" style="left:593px;width:80px;text-align:center;top:277px;font-size:14px">0.5013</div><div class="t b" style="left:685px;width:80px;text-align:center;top:277px;font-size:14px">0.5018</div><div class="t b" style="left:777px;width:80px;text-align:center;top:277px;font-size:14px">0.5023</div><div class="t b" style="left:869px;width:80px;text-align:center;top:277px;font-size:14px">0.5028</div><div class="t b" style="left:962px;width:80px;text-align:center;top:277px;font-size:14px">0.5033</div><div class="t b" style="left:30px;top:129px;font-size:14px;letter-spacing:0.7px">A (mV)</div><svg class="abs" style="left:130px;top:134px" width="24" height="14"><path d="M1 6.5 H23" stroke="#000" stroke-width="2"/><path d="M9 2.5 L14 11 M14 2.5 L9 11" stroke="#000" stroke-width="2"/><path d="M8 2h2v2h-2zM13 2h2v2h-2zM8 10h2v2h-2zM13 10h2v2h-2z" fill="#000"/></svg><div class="t b" style="left:195px;top:128px;font-size:14px;letter-spacing:0.35px">A: Max=</div><div class="t b" style="left:281px;top:128px;font-size:14px;letter-spacing:0.35px">288.8690 mV</div><div class="t b" style="left:378px;top:128px;font-size:14px;letter-spacing:0.35px">MIn=</div><div class="t b" style="left:436px;top:128px;font-size:14px;letter-spacing:0.35px">-289.0352 mV</div><div class="t b" style="left:538px;top:128px;font-size:14px;letter-spacing:0.35px">Mean=</div><div class="t b" style="left:649px;top:128px;font-size:14px;letter-spacing:0.35px">-0.00&nbsp;&nbsp;&mu;V</div><div class="t b" style="left:718px;top:128px;font-size:14px;letter-spacing:0.35px">RMS=</div><div class="t b" style="left:789px;top:128px;font-size:14px;letter-spacing:0.35px">204.30682 mV</div><div class="t b" style="left:13px;top:290px;font-size:14px;letter-spacing:0.2px">+15:18:47:019</div><div class="t b" style="left:495px;top:290px;font-size:14px;letter-spacing:1px">WAVEFORM</div><div class="t b" style="left:1007px;top:289px;font-size:14px">s</div><svg class="abs" style="left:0;top:0" width="1010" height="183"><g fill="#7c7c7c"><rect x="982" y="163" width="5" height="1"/><rect x="990" y="163" width="5" height="1"/><rect x="997" y="163" width="3" height="1"/><rect x="982" y="165" width="5" height="1"/><rect x="990" y="165" width="5" height="1"/><rect x="997" y="165" width="3" height="1"/><rect x="982" y="167" width="5" height="1"/><rect x="990" y="167" width="5" height="1"/><rect x="997" y="167" width="3" height="1"/><rect x="982" y="169" width="3" height="5"/><rect x="987" y="169" width="3" height="5"/><rect x="992" y="169" width="3" height="5"/><rect x="997" y="169" width="3" height="5"/></g></svg><div class="abs" style="left:12px;top:309px;width:1033px;height:18px;background:#f0f0f0"></div><svg class="abs" style="left:17px;top:313px" width="8" height="11"><path d="M6 1.5 L2 5.5 L6 9.5" stroke="#606060" stroke-width="1.6" fill="none"/></svg><svg class="abs" style="left:1033px;top:313px" width="8" height="11"><path d="M2 1.5 L6 5.5 L2 9.5" stroke="#606060" stroke-width="1.6" fill="none"/></svg><div class="abs" style="left:521px;top:310px;width:17px;height:16px;background:#cdcdcd"></div><div class="abs" style="left:3px;top:337px;width:1052px;height:703px;border:1px solid #555;border-radius:6px 6px 0 0;background:linear-gradient(180deg,#b9cadd 0px,#d6e2ef 30px,#dae6f3 100%)"></div><div class="abs" style="left:4px;top:338px;width:1050px;height:701px;border:1px solid #e8f0f8;border-top-color:#d0dde9;border-radius:5px 5px 0 0"></div><div class="abs" style="left:13px;top:348px;width:16px;height:16px"><svg width="16" height="16"><rect width="16" height="16" fill="#0000ff"/><path d="M1.5 1V14 M4.5 4V14 M7.5 7V14 M10.5 9V14 M13.5 11V14 M0 14.5H16" stroke="#ffff00" stroke-width="1.2"/></svg></div><div class="t" style="left:33px;top:350px;font-size:12px;color:#8c8c8c">Spectrum Analyzer</div><div class="abs" style="left:945px;top:347px;width:31px;height:18px;border:1px solid #8391a8;border-radius:3px;background:linear-gradient(180deg,#d0dceb,#c3d1e2)"></div><div class="abs" style="left:955px;top:355px;width:11px;height:5px;border-radius:2px;background:#eeeeee;border:1px solid #3c3c4c"></div><div class="abs" style="left:979px;top:347px;width:31px;height:18px;border:1px solid #8391a8;border-radius:3px;background:linear-gradient(180deg,#d0dceb,#c3d1e2)"></div><div class="abs" style="left:989px;top:351px;width:11px;height:9px;border-radius:1px;background:#f0f0f0;border:1px solid #3c3c4c"></div><div class="abs" style="left:992px;top:354px;width:5px;height:3px;background:#c0cedd;border:1px solid #3c3c4c"></div><div class="abs" style="left:1013px;top:347px;width:31px;height:18px;border:1px solid #8391a8;border-radius:3px;background:linear-gradient(180deg,#d0dceb,#c3d1e2)"></div><svg class="abs" style="left:1022px;top:350px" width="13" height="11"><path d="M2.5 2 L10.5 9 M10.5 2 L2.5 9" stroke="#3c3c4c" stroke-width="3.6" stroke-linecap="round"/><path d="M2.5 2 L10.5 9 M10.5 2 L2.5 9" stroke="#f0f0f0" stroke-width="1.8" stroke-linecap="round"/></svg><div class="abs" style="left:11px;top:368px;width:1035px;height:664px;background:#dcdcdc;border-top:1px solid #696969;border-left:1px solid #696969;border-right:1px solid #fff;border-bottom:1px solid #fff;box-shadow:inset 1px 1px 0 #a0a0a0"></div><svg class="abs" style="left:0;top:0" width="1060" height="1040"><line x1="79.5" y1="460.5" x2="1001.5" y2="460.5" stroke="#6e6e6e" stroke-dasharray="3,3" stroke-dashoffset="1" shape-rendering="crispEdges"/><line x1="79.5" y1="519.5" x2="1001.5" y2="519.5" stroke="#6e6e6e" stroke-dasharray="3,3" stroke-dashoffset="1" shape-rendering="crispEdges"/><line x1="79.5" y1="578.5" x2="1001.5" y2="578.5" stroke="#6e6e6e" stroke-dasharray="3,3" stroke-dashoffset="1" shape-rendering="crispEdges"/><line x1="79.5" y1="637.5" x2="1001.5" y2="637.5" stroke="#6e6e6e" stroke-dasharray="3,3" stroke-dashoffset="1" shape-rendering="crispEdges"/><line x1="79.5" y1="697.5" x2="1001.5" y2="697.5" stroke="#6e6e6e" stroke-dasharray="3,3" stroke-dashoffset="1" shape-rendering="crispEdges"/><line x1="79.5" y1="756.5" x2="1001.5" y2="756.5" stroke="#6e6e6e" stroke-dasharray="3,3" stroke-dashoffset="1" shape-rendering="crispEdges"/><line x1="79.5" y1="815.5" x2="1001.5" y2="815.5" stroke="#6e6e6e" stroke-dasharray="3,3" stroke-dashoffset="1" shape-rendering="crispEdges"/><line x1="79.5" y1="874.5" x2="1001.5" y2="874.5" stroke="#6e6e6e" stroke-dasharray="3,3" stroke-dashoffset="1" shape-rendering="crispEdges"/><line x1="79.5" y1="933.5" x2="1001.5" y2="933.5" stroke="#6e6e6e" stroke-dasharray="3,3" stroke-dashoffset="1" shape-rendering="crispEdges"/><line x1="131.5" y1="401.5" x2="131.5" y2="993.5" stroke="#6e6e6e" stroke-dasharray="3,3" stroke-dashoffset="1" shape-rendering="crispEdges"/><line x1="169.5" y1="401.5" x2="169.5" y2="993.5" stroke="#6e6e6e" stroke-dasharray="3,3" stroke-dashoffset="1" shape-rendering="crispEdges"/><line x1="198.5" y1="401.5" x2="198.5" y2="993.5" stroke="#6e6e6e" stroke-dasharray="3,3" stroke-dashoffset="1" shape-rendering="crispEdges"/><line x1="222.5" y1="401.5" x2="222.5" y2="993.5" stroke="#6e6e6e" stroke-dasharray="3,3" stroke-dashoffset="1" shape-rendering="crispEdges"/><line x1="242.5" y1="401.5" x2="242.5" y2="993.5" stroke="#6e6e6e" stroke-dasharray="3,3" stroke-dashoffset="1" shape-rendering="crispEdges"/><line x1="259.5" y1="401.5" x2="259.5" y2="993.5" stroke="#6e6e6e" stroke-dasharray="3,3" stroke-dashoffset="1" shape-rendering="crispEdges"/><line x1="274.5" y1="401.5" x2="274.5" y2="993.5" stroke="#6e6e6e" stroke-dasharray="3,3" stroke-dashoffset="1" shape-rendering="crispEdges"/><line x1="288.5" y1="401.5" x2="288.5" y2="993.5" stroke="#6e6e6e" stroke-dasharray="3,3" stroke-dashoffset="1" shape-rendering="crispEdges"/><line x1="378.5" y1="401.5" x2="378.5" y2="993.5" stroke="#6e6e6e" stroke-dasharray="3,3" stroke-dashoffset="1" shape-rendering="crispEdges"/><line x1="431.5" y1="401.5" x2="431.5" y2="993.5" stroke="#6e6e6e" stroke-dasharray="3,3" stroke-dashoffset="1" shape-rendering="crispEdges"/><line x1="469.5" y1="401.5" x2="469.5" y2="993.5" stroke="#6e6e6e" stroke-dasharray="3,3" stroke-dashoffset="1" shape-rendering="crispEdges"/><line x1="498.5" y1="401.5" x2="498.5" y2="993.5" stroke="#6e6e6e" stroke-dasharray="3,3" stroke-dashoffset="1" shape-rendering="crispEdges"/><line x1="521.5" y1="401.5" x2="521.5" y2="993.5" stroke="#6e6e6e" stroke-dasharray="3,3" stroke-dashoffset="1" shape-rendering="crispEdges"/><line x1="541.5" y1="401.5" x2="541.5" y2="993.5" stroke="#6e6e6e" stroke-dasharray="3,3" stroke-dashoffset="1" shape-rendering="crispEdges"/><line x1="559.5" y1="401.5" x2="559.5" y2="993.5" stroke="#6e6e6e" stroke-dasharray="3,3" stroke-dashoffset="1" shape-rendering="crispEdges"/><line x1="574.5" y1="401.5" x2="574.5" y2="993.5" stroke="#6e6e6e" stroke-dasharray="3,3" stroke-dashoffset="1" shape-rendering="crispEdges"/><line x1="588.5" y1="401.5" x2="588.5" y2="993.5" stroke="#6e6e6e" stroke-dasharray="3,3" stroke-dashoffset="1" shape-rendering="crispEdges"/><line x1="678.5" y1="401.5" x2="678.5" y2="993.5" stroke="#6e6e6e" stroke-dasharray="3,3" stroke-dashoffset="1" shape-rendering="crispEdges"/><line x1="731.5" y1="401.5" x2="731.5" y2="993.5" stroke="#6e6e6e" stroke-dasharray="3,3" stroke-dashoffset="1" shape-rendering="crispEdges"/><line x1="768.5" y1="401.5" x2="768.5" y2="993.5" stroke="#6e6e6e" stroke-dasharray="3,3" stroke-dashoffset="1" shape-rendering="crispEdges"/><line x1="797.5" y1="401.5" x2="797.5" y2="993.5" stroke="#6e6e6e" stroke-dasharray="3,3" stroke-dashoffset="1" shape-rendering="crispEdges"/><line x1="821.5" y1="401.5" x2="821.5" y2="993.5" stroke="#6e6e6e" stroke-dasharray="3,3" stroke-dashoffset="1" shape-rendering="crispEdges"/><line x1="841.5" y1="401.5" x2="841.5" y2="993.5" stroke="#6e6e6e" stroke-dasharray="3,3" stroke-dashoffset="1" shape-rendering="crispEdges"/><line x1="859.5" y1="401.5" x2="859.5" y2="993.5" stroke="#6e6e6e" stroke-dasharray="3,3" stroke-dashoffset="1" shape-rendering="crispEdges"/><line x1="874.5" y1="401.5" x2="874.5" y2="993.5" stroke="#6e6e6e" stroke-dasharray="3,3" stroke-dashoffset="1" shape-rendering="crispEdges"/><line x1="888.5" y1="401.5" x2="888.5" y2="993.5" stroke="#6e6e6e" stroke-dasharray="3,3" stroke-dashoffset="1" shape-rendering="crispEdges"/><line x1="978.5" y1="401.5" x2="978.5" y2="993.5" stroke="#6e6e6e" stroke-dasharray="3,3" stroke-dashoffset="1" shape-rendering="crispEdges"/><rect x="79.5" y="401.5" width="922" height="592" fill="none" stroke="#707070"/><polyline points="79.4,889.9 98.1,884.1 106.6,884.7 121.6,894.1 130.9,888.1 135.6,888.1 145.9,902.1 157.2,889.9 163.8,888.8 170.3,889.4 181.6,903.8 185.3,903.8 193.8,886.6 197.5,882.4 205.0,891.6 212.5,892.8 217.2,899.1 220.0,899.1 223.8,894.1 230.3,894.4 236.9,904.8 241.6,900.6 247.2,903.1 252.8,902.5 260.3,895.6 270.6,904.9 274.4,904.9 277.2,902.1 281.9,902.1 287.5,892.8 294.1,895.9 299.7,907.2 304.4,897.8 308.1,901.6 311.9,899.7 319.4,901.6 322.2,904.4 325.0,898.4 329.7,900.6 331.6,895.6 336.3,903.4 341.0,904.4 343.8,911.9 349.4,900.6 352.2,911.9 356.9,902.5 359.7,911.9 363.5,898.8 369.1,915.6 377.5,896.5 380.3,912.8 385.0,899.7 388.8,898.8 392.5,913.8 397.2,909.1 401.9,902.5 405.6,913.8 413.1,914.7 416.0,900.6 418.8,917.5 422.5,903.4 430.0,904.4 430.3,901.4 430.9,901.7 431.6,904.5 432.2,903.1 432.9,902.3 433.5,899.4 434.1,899.7 434.7,902.8 435.4,904.1 436.0,904.5 436.6,905.9 437.2,906.4 437.8,910.2 438.4,908.1 439.0,906.8 439.6,911.6 440.2,909.6 440.8,908.2 441.4,905.1 442.0,908.9 442.6,910.4 443.2,904.5 443.8,906.6 444.3,903.1 444.9,905.9 445.5,904.1 446.1,906.2 446.6,903.1 447.2,907.8 447.8,912.8 448.3,910.5 448.9,906.0 449.4,907.1 450.0,904.2 450.6,906.7 451.1,902.9 451.7,902.4 452.2,904.2 452.7,903.7 453.3,905.9 453.8,909.8 454.4,907.8 454.9,906.8 455.4,905.4 456.0,903.6 456.5,905.2 457.0,907.2 457.5,906.4 458.1,910.6 458.6,905.8 459.1,906.9 459.6,910.1 460.1,906.3 460.6,908.9 461.1,905.1 461.7,904.8 462.2,908.1 462.7,908.8 463.2,912.9 463.7,911.9 464.2,914.7 464.7,908.0 465.2,906.5 465.6,913.2 466.1,909.8 466.6,905.8 467.1,908.5 467.6,911.1 468.1,910.8 468.6,907.4 469.0,905.5 469.5,909.5 470.0,911.7 470.5,905.0 470.9,904.6 471.4,907.8 471.9,908.4 472.3,904.3 472.8,909.7 473.3,906.9 473.7,908.7 474.2,914.6 474.7,909.5 475.1,914.1 475.6,912.5 476.0,912.5 476.5,904.9 476.9,905.8 477.4,912.6 477.8,912.4 478.3,913.2 478.7,908.4 479.2,908.2 479.6,913.1 480.0,917.0 480.5,916.6 480.9,916.9 481.4,909.4 481.8,911.8 482.2,909.2 482.7,907.4 483.1,912.9 483.5,907.7 483.9,904.3 484.4,911.5 484.8,908.2 485.2,904.3 485.6,907.5 486.1,905.0 486.5,913.3 486.9,905.5 487.3,908.2 487.7,909.2 488.1,904.2 488.6,909.1 489.0,905.4 489.4,909.1 489.8,907.6 490.2,910.8 490.6,910.6 491.0,909.7 491.4,909.6 491.8,903.4 492.2,908.7 492.6,917.3 493.0,913.7 493.4,903.0 493.8,906.1 494.2,905.0 494.6,918.6 495.0,909.2 495.4,906.4 495.8,906.4 496.2,912.4 496.6,907.3 496.9,907.3 497.3,907.5 497.7,911.5 498.1,909.3 498.5,911.0 498.9,908.0 499.2,905.1 499.6,914.2 500.0,905.3 500.4,913.3 500.7,912.6 501.1,905.6 501.5,909.8 501.9,910.5 502.2,907.6 502.6,910.0 503.0,909.0 503.3,904.4 503.7,914.3 504.1,913.6 504.4,909.4 504.8,913.1 505.2,912.5 505.5,913.0 505.9,904.5 506.3,906.0 506.6,911.0 507.0,909.1 507.3,907.5 507.7,906.9 508.0,914.3 508.4,910.0 508.7,911.7 509.1,907.6 509.5,910.4 509.8,911.2 510.2,916.0 510.5,914.0 510.9,912.8 511.2,908.4 511.5,913.1 511.9,912.3 512.2,910.3 512.6,911.9 512.9,910.1 513.3,905.9 513.6,912.8 513.9,910.1 514.3,912.8 514.6,910.2 515.0,914.0 515.3,914.9 515.6,909.2 516.0,908.7 516.3,914.6 516.6,915.3 517.0,916.2 517.3,913.2 517.6,903.7 517.9,915.5 518.3,907.3 518.6,916.5 518.9,907.4 519.3,913.8 519.6,907.2 519.9,912.3 520.2,904.5 520.5,907.9 520.9,908.8 521.2,910.1 521.5,915.9 521.8,912.2 522.2,908.7 522.5,914.4 522.8,911.4 523.1,914.4 523.4,909.3 523.7,904.4 524.0,911.7 524.4,909.3 524.7,912.8 525.0,910.3 525.3,915.2 525.6,907.8 525.9,909.3 526.2,903.1 526.5,907.6 526.8,910.8 527.1,907.5 527.5,909.9 527.8,910.7 528.1,907.3 528.4,917.8 528.7,917.8 529.0,910.9 529.3,907.3 529.6,910.0 529.9,906.0 530.2,910.0 530.5,911.0 530.8,907.3 531.1,909.0 531.4,909.9 531.7,903.8 532.0,909.8 532.3,908.6 532.5,909.2 532.8,916.7 533.1,915.5 533.4,915.3 533.7,910.8 534.0,908.5 534.3,905.6 534.6,919.4 534.9,911.5 535.2,903.1 535.5,902.0 535.7,907.3 536.0,902.0 536.3,912.1 536.6,915.8 536.9,910.5 537.2,908.7 537.5,905.2 537.7,906.6 538.0,908.5 538.3,909.7 538.6,919.6 538.9,909.4 539.1,916.0 539.4,913.2 539.7,912.1 540.0,906.1 540.3,906.4 540.5,908.9 540.8,915.5 541.1,908.7 541.4,903.4 541.6,905.4 541.9,905.9 542.2,910.4 542.4,912.0 542.7,906.8 543.0,903.0 543.3,909.1 543.5,905.9 543.8,902.3 544.1,911.4 544.3,908.9 544.6,915.0 544.9,912.0 545.1,916.9 545.4,907.9 545.7,902.1 545.9,904.5 546.2,905.8 546.5,904.2 546.7,913.4 547.0,911.3 547.3,904.0 547.5,908.9 547.8,908.7 548.0,906.3 548.3,909.8 548.6,904.6 548.8,894.3 549.1,903.9 549.3,906.2 549.6,901.2 549.9,901.8 550.1,914.4 550.4,892.2 550.6,903.4 550.9,910.0 551.1,919.8 551.4,897.7 551.6,897.9 551.9,889.7 552.2,909.4 552.4,893.5 552.7,895.1 552.9,907.4 553.2,891.7 553.4,902.2 553.7,906.4 553.9,895.6 554.2,907.6 554.4,898.1 554.7,897.9 554.9,894.0 555.2,895.7 555.4,894.3 555.6,910.6 555.9,897.4 556.1,896.3 556.4,893.6 556.6,897.2 556.9,883.6 557.1,895.7 557.4,890.7 557.6,887.9 557.8,890.2 558.1,898.4 558.3,893.4 558.6,888.7 558.8,894.8 559.0,885.0 559.3,877.5 559.5,887.1 559.8,887.0 560.0,897.9 560.2,889.2 560.5,890.7 560.7,883.3 561.0,891.5 561.2,889.1 561.4,889.3 561.7,880.9 561.9,893.5 562.1,890.9 562.4,894.5 562.6,881.6 562.8,892.2 563.1,884.8 563.3,880.1 563.5,894.6 563.8,883.0 564.0,882.7 564.2,886.6 564.4,877.8 564.7,910.2 564.9,881.5 565.1,879.0 565.4,874.5 565.6,877.1 565.8,877.4 566.1,886.2 566.3,879.6 566.5,882.9 566.7,880.3 567.0,878.0 567.2,883.2 567.4,884.4 567.6,885.9 567.9,880.3 568.1,879.7 568.3,888.0 568.5,891.0 568.7,878.2 569.0,877.7 569.2,887.6 569.4,881.1 569.6,879.5 569.9,869.5 570.1,867.1 570.3,881.6 570.5,865.2 570.7,873.6 571.0,870.5 571.2,865.3 571.4,885.0 571.6,878.0 571.8,872.4 572.0,877.1 572.3,876.2 572.5,887.7 572.7,884.7 572.9,877.7 573.1,880.6 573.3,874.1 573.6,857.4 573.8,876.4 574.0,879.3 574.2,872.7 574.4,882.1 574.6,879.2 574.8,867.3 575.0,866.3 575.3,863.1 575.5,866.0 575.7,870.1 575.9,863.4 576.1,873.6 576.3,861.0 576.5,884.7 576.7,852.9 576.9,869.2 577.2,861.2 577.4,863.9 577.6,858.6 577.8,873.3 578.0,860.7 578.2,858.4 578.4,857.7 578.6,871.2 578.8,851.3 579.0,859.9 579.2,849.8 579.4,856.1 579.6,863.4 579.8,863.2 580.0,857.3 580.2,873.2 580.4,852.8 580.7,857.2 580.9,849.0 581.1,858.8 581.3,854.4 581.5,863.0 581.7,856.9 581.9,850.3 582.1,851.6 582.3,854.9 582.5,852.6 582.7,846.1 582.9,856.0 583.1,833.6 583.3,844.0 583.5,864.6 583.7,832.9 583.9,854.3 584.1,837.5 584.3,830.7 584.5,832.6 584.7,826.7 584.8,825.3 585.0,832.9 585.2,835.7 585.4,828.3 585.6,833.7 585.8,822.7 587,815.4 587,796.6 588,737.8 588,785.1 589,783.2 589,734.7 590,791.1 590,816.7 591,835.2 591,807.7 592,822.0 592,838.4 593,846.4 593,825.1 594,834.8 594,855.3 595,861.0 595,841.4 596,841.4 596,863.1 597,882.0 597,842.5 598,846.6 598,866.2 599,869.3 599,851.9 600,856.9 600,872.0 601,877.7 601,856.1 602,861.6 602,872.3 603,877.9 603,859.8 604,864.8 604,872.7 605,885.0 605,872.0 606,874.3 606,885.0 607,880.8 607,868.6 608,878.0 608,883.4 609,884.6 609,871.0 610,874.5 610,897.4 611,887.4 611,875.1 612,878.0 612,902.7 613,891.9 613,880.5 614,880.0 614,900.0 615,899.3 615,878.8 616,891.8 616,902.5 617,896.0 617,881.7 618,883.2 618,905.0 619,901.6 619,882.8 620,895.7 620,904.2 621,907.2 621,890.9 622,902.2 622,913.7 623,912.7 623,895.7 624,897.3 624,921.2 625,914.4 625,895.9 626,902.5 626,927.3 627,916.8 627,895.0 628,901.2 628,925.8 629,917.4 629,901.2 630,903.6 630,911.1 631,914.7 631,905.0 632,898.5 632,922.8 633,922.0 633,905.4 634,900.9 634,929.4 635,922.3 635,907.9 636,907.0 636,918.8 637,923.1 637,901.5 638,904.5 638,931.9 639,922.2 639,907.8 640,907.3 640,923.6 641,919.3 641,908.1 642,912.5 642,921.4 643,924.8 643,912.8 644,904.9 644,923.7 645,924.5 645,909.0 646,911.3 646,927.4 647,919.3 647,910.9 648,907.3 648,928.7 649,920.9 649,907.4 650,904.9 650,927.0 651,923.4 651,910.7 652,915.4 652,922.6 653,925.9 653,911.5 654,911.5 654,933.7 655,924.3 655,910.0 656,906.0 656,920.5 657,924.5 657,909.0 658,908.8 658,924.4 659,927.1 659,910.8 660,912.6 660,926.1 661,930.7 661,910.3 662,911.7 662,923.7 663,922.1 663,912.2 664,911.8 664,931.6 665,926.3 665,911.3 666,913.6 666,927.3 667,922.0 667,908.3 668,913.1 668,928.8 669,925.6 669,912.9 670,909.5 670,922.6 671,922.6 671,915.6 672,912.6 672,921.1 673,927.7 673,914.1 674,914.4 674,922.3 675,922.6 675,911.5 676,911.2 676,932.5 677,934.5 677,916.8 678,907.7 678,921.4 679,923.4 679,905.5 680,913.8 680,927.9 681,923.8 681,912.1 682,911.2 682,926.0 683,931.3 683,914.5 684,913.5 684,926.5 685,924.2 685,907.9 686,912.1 686,935.9 687,923.1 687,914.1 688,911.6 688,920.8 689,926.0 689,910.2 690,914.5 690,924.4 691,926.1 691,912.4 692,913.9 692,925.6 693,927.6 693,909.5 694,916.0 694,926.9 695,925.7 695,914.7 696,911.8 696,925.1 697,928.1 697,911.1 698,911.0 698,922.4 699,922.8 699,909.5 700,916.9 700,930.3 701,923.1 701,911.3 702,915.1 702,927.0 703,921.8 703,910.3 704,912.6 704,930.1 705,927.1 705,915.6 706,911.0 706,935.5 707,935.4 707,913.2 708,914.7 708,927.9 709,926.5 709,913.3 710,910.6 710,926.1 711,925.9 711,916.8 712,915.3 712,924.8 713,923.2 713,912.5 714,913.8 714,927.4 715,927.6 715,908.6 716,911.4 716,930.5 717,932.8 717,915.0 718,914.5 718,930.1 719,924.4 719,912.7 720,914.7 720,928.7 721,933.2 721,909.4 722,908.5 722,923.8 723,929.6 723,910.7 724,912.9 724,927.9 725,924.5 725,914.2 726,912.4 726,925.2 727,923.3 727,912.2 728,912.7 728,926.4 729,926.3 729,911.9 730,913.3 730,924.4 731,934.3 731,913.8 732,913.6 732,926.2 733,927.8 733,912.2 734,909.1 734,925.3 735,922.1 735,911.6 736,909.7 736,934.6 737,926.1 737,911.4 738,912.4 738,926.8 739,924.8 739,910.6 740,916.3 740,926.3 741,932.9 741,910.0 742,913.0 742,926.0 743,930.2 743,912.3 744,914.6 744,927.8 745,925.2 745,913.5 746,914.5 746,923.1 747,924.0 747,913.1 748,911.7 748,928.5 749,928.2 749,916.4 750,913.8 750,926.8 751,931.2 751,912.5 752,909.7 752,930.1 753,930.1 753,912.4 754,912.1 754,932.7 755,926.2 755,910.3 756,910.7 756,930.4 757,933.1 757,911.8 758,912.8 758,932.2 759,925.1 759,913.1 760,912.0 760,927.8 761,927.3 761,907.6 762,910.6 762,928.3 763,928.5 763,913.9 764,909.1 764,928.0 765,925.3 765,912.9 766,911.3 766,925.8 767,931.6 767,912.2 768,910.0 768,927.3 769,928.9 769,909.3 770,907.7 770,928.5 771,928.9 771,910.7 772,909.7 772,926.7 773,927.0 773,910.8 774,909.2 774,928.2 775,923.8 775,910.6 776,910.7 776,930.9 777,931.8 777,911.1 778,914.2 778,929.3 779,930.9 779,913.4 780,912.0 780,934.5 781,926.4 781,913.5 782,911.7 782,935.1 783,928.5 783,913.9 784,913.2 784,927.4 785,927.7 785,915.5 786,911.4 786,927.8 787,927.3 787,912.5 788,913.5 788,928.5 789,931.9 789,912.4 790,912.4 790,931.7 791,926.1 791,909.6 792,911.2 792,929.4 793,923.9 793,912.4 794,910.6 794,930.5 795,926.8 795,911.4 796,912.1 796,931.2 797,928.2 797,914.3 798,911.7 798,926.0 799,932.3 799,913.2 800,911.4 800,928.6 801,926.8 801,910.7 802,909.1 802,931.7 803,930.5 803,915.0 804,910.7 804,931.0 805,930.6 805,915.1 806,914.0 806,929.6 807,924.3 807,912.6 808,914.5 808,929.1 809,932.8 809,909.3 810,911.8 810,926.6 811,933.2 811,912.6 812,911.3 812,930.3 813,932.9 813,908.8 814,913.3 814,930.4 815,930.8 815,912.3 816,912.5 816,928.8 817,935.5 817,912.7 818,910.7 818,930.8 819,926.8 819,911.5 820,911.5 820,927.7 821,931.0 821,913.5 822,912.2 822,929.1 823,929.5 823,911.6 824,912.1 824,930.4 825,933.3 825,911.3 826,915.3 826,929.2 827,930.6 827,910.9 828,911.2 828,932.7 829,930.7 829,911.4 830,914.0 830,932.4 831,928.4 831,911.1 832,908.8 832,931.8 833,931.8 833,913.7 834,912.3 834,930.6 835,930.1 835,912.2 836,910.4 836,928.9 837,930.4 837,912.4 838,913.8 838,930.1 839,929.9 839,909.9 840,910.7 840,928.7 841,928.4 841,914.6 842,910.0 842,935.7 843,928.8 843,911.7 844,911.8 844,933.0 845,927.8 845,913.9 846,912.5 846,928.8 847,928.3 847,911.4 848,912.5 848,935.5 849,927.7 849,908.4 850,910.4 850,927.7 851,935.0 851,908.4 852,913.5 852,932.5 853,928.7 853,911.2 854,910.6 854,934.2 855,927.1 855,913.8 856,912.0 856,927.5 857,931.1 857,912.3 858,910.1 858,929.8 859,932.7 859,912.6 860,911.9 860,929.7 861,926.6 861,910.3 862,913.3 862,931.0 863,930.8 863,913.4 864,913.3 864,934.7 865,930.1 865,912.5 866,912.1 866,930.9 867,932.3 867,908.9 868,911.4 868,928.3 869,934.1 869,910.8 870,910.1 870,928.6 871,929.8 871,914.0 872,911.0 872,928.8 873,930.3 873,912.1 874,911.8 874,930.2 875,933.1 875,912.1 876,913.0 876,936.4 877,931.1 877,913.4 878,911.7 878,928.9 879,927.9 879,909.8 880,912.6 880,932.7 881,929.7 881,910.0 882,911.9 882,935.2 883,932.8 883,910.4 884,912.0 884,932.5 885,933.5 885,909.8 886,913.6 886,928.9 887,932.1 887,910.3 888,911.0 888,930.0 889,929.7 889,910.3 890,912.7 890,933.0 891,928.3 891,910.4 892,912.4 892,934.0 893,929.2 893,912.5 894,912.7 894,929.5 895,931.4 895,914.7 896,912.2 896,929.9 897,928.0 897,913.7 898,910.7 898,930.8 899,932.2 899,911.9 900,912.4 900,938.2 901,933.5 901,912.0 902,913.0 902,934.8 903,932.6 903,912.4 904,912.5 904,932.5 905,934.7 905,911.7 906,909.3 906,936.5 907,930.8 907,911.9 908,909.5 908,930.3 909,938.9 909,911.5 910,912.1 910,931.8 911,932.6 911,908.3 912,911.3 912,931.8 913,931.8 913,912.3 914,913.6 914,929.7 915,936.3 915,912.4 916,912.8 916,931.4 917,928.7 917,913.9 918,911.3 918,934.1 919,932.9 919,910.4 920,911.5 920,930.1 921,934.2 921,911.2 922,909.3 922,933.6 923,931.2 923,909.9 924,914.3 924,932.3 925,931.8 925,910.9 926,913.0 926,929.8 927,931.2 927,912.4 928,910.1 928,927.9 929,935.8 929,911.3 930,910.7 930,928.6 931,931.1 931,910.4 932,912.6 932,932.3 933,933.4 933,911.4 934,910.7 934,930.5 935,930.1 935,912.7 936,912.0 936,934.1 937,930.5 937,914.1 938,911.8 938,930.2 939,933.2 939,914.3 940,913.0 940,930.5 941,933.3 941,910.0 942,912.0 942,940.8 943,929.6 943,913.4 944,911.2 944,930.1 945,934.7 945,911.5 946,912.5 946,935.6 947,934.2 947,913.1 948,912.5 948,937.1 949,933.4 949,913.5 950,910.1 950,931.6 951,936.6 951,911.8 952,911.4 952,935.7 953,931.0 953,913.5 954,913.0 954,930.5 955,931.4 955,909.7 956,912.3 956,934.1 957,933.7 957,909.9 958,911.4 958,932.6 959,937.0 959,912.1 960,910.2 960,930.6 961,933.3 961,911.1 962,911.3 962,934.2 963,936.8 963,912.2 964,910.6 964,932.9 965,933.3 965,912.4 966,912.6 966,931.9 967,934.1 967,909.5 968,908.0 968,929.6 969,939.5 969,912.5 970,911.7 970,932.4 971,933.2 971,912.0 972,913.1 972,940.1 973,933.2 973,912.9 974,908.5 974,931.5 975,932.3 975,912.4 976,911.1 976,931.6 977,938.3 977,910.0 978,912.0 978,934.4 979,930.9 979,912.9 980,910.1 980,937.9 981,942.1 981,911.2 982,908.8 982,933.8 983,939.5 983,911.8 984,911.8 984,932.8 985,934.2 985,910.8 986,912.5 986,932.3 987,929.9 987,910.5 988,912.5 988,934.0 989,937.0 989,910.3 990,911.9 990,930.2 991,940.0 991,911.4 992,912.1 992,935.5 993,935.7 993,913.1 994,912.7 994,932.2 995,933.1 995,911.2 996,910.7 996,936.7 997,931.9 997,911.2 998,914.5 998,934.7 999,936.3 999,911.9 1000,912.2 1000,932.4" fill="none" stroke="#000" stroke-width="2" stroke-linejoin="round"/><path d="M587.8 445 V880" stroke="#000" stroke-width="2.5"/><path d="M590 605 V870" stroke="#000" stroke-width="1"/><line x1="678.5" y1="827.7" x2="678.5" y2="915" stroke="#000" stroke-width="2"/><line x1="731.3" y1="856.5" x2="731.3" y2="915" stroke="#000" stroke-width="2"/><line x1="768.7" y1="839.6" x2="768.7" y2="915" stroke="#000" stroke-width="2"/><line x1="797.8" y1="844.3" x2="797.8" y2="915" stroke="#000" stroke-width="2"/><line x1="821.5" y1="860.3" x2="821.5" y2="915" stroke="#000" stroke-width="2"/><line x1="841.6" y1="844.3" x2="841.6" y2="915" stroke="#000" stroke-width="2"/><line x1="859.0" y1="868.0" x2="859.0" y2="915" stroke="#000" stroke-width="2"/><line x1="874.3" y1="891.4" x2="874.3" y2="915" stroke="#000" stroke-width="2"/><line x1="888.0" y1="881.0" x2="888.0" y2="915" stroke="#000" stroke-width="2"/><line x1="900.4" y1="889.9" x2="900.4" y2="915" stroke="#000" stroke-width="2"/><line x1="911.8" y1="898.8" x2="911.8" y2="915" stroke="#000" stroke-width="2"/><line x1="922.2" y1="889.0" x2="922.2" y2="915" stroke="#000" stroke-width="2"/><line x1="949.2" y1="898.8" x2="949.2" y2="915" stroke="#000" stroke-width="2"/><line x1="971.6" y1="904.7" x2="971.6" y2="915" stroke="#000" stroke-width="2"/><line x1="940.8" y1="907.7" x2="940.8" y2="915" stroke="#000" stroke-width="2"/></svg><div class="t b" style="left:0;width:76px;text-align:right;top:394px;font-size:14px">0</div><div class="t b" style="left:0;width:76px;text-align:right;top:453px;font-size:14px">-20</div><div class="t b" style="left:0;width:76px;text-align:right;top:512px;font-size:14px">-40</div><div class="t b" style="left:0;width:76px;text-align:right;top:571px;font-size:14px">-60</div><div class="t b" style="left:0;width:76px;text-align:right;top:630px;font-size:14px">-80</div><div class="t b" style="left:0;width:76px;text-align:right;top:690px;font-size:14px">-100</div><div class="t b" style="left:0;width:76px;text-align:right;top:749px;font-size:14px">-120</div><div class="t b" style="left:0;width:76px;text-align:right;top:808px;font-size:14px">-140</div><div class="t b" style="left:0;width:76px;text-align:right;top:867px;font-size:14px">-160</div><div class="t b" style="left:0;width:76px;text-align:right;top:926px;font-size:14px">-180</div><div class="t b" style="left:0;width:76px;text-align:right;top:986px;font-size:14px">-200</div><div class="t b" style="left:50px;width:60px;text-align:center;top:998px;font-size:14px">20</div><div class="t b" style="left:169px;width:60px;text-align:center;top:998px;font-size:14px">50</div><div class="t b" style="left:259px;width:60px;text-align:center;top:998px;font-size:14px">100</div><div class="t b" style="left:349px;width:60px;text-align:center;top:998px;font-size:14px">200</div><div class="t b" style="left:469px;width:60px;text-align:center;top:998px;font-size:14px">500</div><div class="t b" style="left:559px;width:60px;text-align:center;top:998px;font-size:14px">1k</div><div class="t b" style="left:649px;width:60px;text-align:center;top:998px;font-size:14px">2k</div><div class="t b" style="left:768px;width:60px;text-align:center;top:998px;font-size:14px">5k</div><div class="t b" style="left:859px;width:60px;text-align:center;top:998px;font-size:14px">10k</div><div class="t b" style="left:949px;width:60px;text-align:center;top:998px;font-size:14px">20k</div><div class="t b" style="left:19px;top:370px;font-size:14px;letter-spacing:0.6px">A(dBFS)</div><div class="t b" style="left:1008px;top:1010px;font-size:14px">Hz</div><div class="t b" style="left:15px;top:1012px;font-size:14px;letter-spacing:0.35px">FFT Segments:1&nbsp;&nbsp;&nbsp;Resolution: 1.46484Hz&nbsp;&nbsp;&nbsp;-C-</div><div class="t b" style="left:422px;top:1012px;font-size:14px;letter-spacing:0.65px">AMPLITUDE SPECTRUM In dBFS</div><div class="t b" style="left:805px;top:1012px;font-size:14px;letter-spacing:0.4px">Averaged Frames: 6</div><svg class="abs" style="left:0;top:0" width="1010" height="425"><g fill="#7c7c7c"><rect x="982" y="405" width="5" height="1"/><rect x="990" y="405" width="5" height="1"/><rect x="997" y="405" width="3" height="1"/><rect x="982" y="407" width="5" height="1"/><rect x="990" y="407" width="5" height="1"/><rect x="997" y="407" width="3" height="1"/><rect x="982" y="409" width="5" height="1"/><rect x="990" y="409" width="5" height="1"/><rect x="997" y="409" width="3" height="1"/><rect x="982" y="411" width="3" height="5"/><rect x="987" y="411" width="3" height="5"/><rect x="992" y="411" width="3" height="5"/><rect x="997" y="411" width="3" height="5"/></g></svg><div class="abs" style="left:1061px;top:95px;width:316px;height:153px;border-left:1px solid #6a6a6a;border-top:1px solid #6a6a6a;background:#fff;box-shadow:1px 1px 7px 1px rgba(0,0,0,0.30)"></div><div class="abs" style="left:1062px;top:96px;width:315px;height:30px;background:linear-gradient(90deg,#fff 88%,#f7f7f7)"></div><div class="abs" style="left:1071px;top:103px;width:16px;height:16px"><svg width="16" height="16" viewBox="0 0 16 16" shape-rendering="crispEdges"><path d="M0 0h3v1h-3zM0 1h1v1h-1zM3 1h1v1h-1zM0 2h1v1h-1zM3 2h1v1h-1zM0 3h1v1h-1zM3 3h1v1h-1zM0 4h1v1h-1zM3 4h1v1h-1zM0 5h3v1h-3z" fill="#0000ff"/><path d="M5 0h3v1h-3zM5 1h1v1h-1zM8 1h1v1h-1zM5 2h1v1h-1zM8 2h1v1h-1zM5 3h1v1h-1zM8 3h1v1h-1zM5 4h1v1h-1zM8 4h1v1h-1zM5 5h3v1h-3z" fill="#ff0000"/><path d="M10 0h3v1h-3zM10 1h1v1h-1zM13 1h1v1h-1zM10 2h1v1h-1zM13 2h1v1h-1zM10 3h3v1h-3zM10 4h1v1h-1zM10 5h1v1h-1z" fill="#00ee00"/><path d="M5 7h3v1h-3zM4 8h1v1h-1zM8 8h1v1h-1zM3 9h1v1h-1zM6 9h1v1h-1zM9 9h1v1h-1zM3 10h1v1h-1zM5 10h3v1h-3zM9 10h1v1h-1zM3 11h1v1h-1zM6 11h1v1h-1zM9 11h1v1h-1zM4 12h1v1h-1zM8 12h1v1h-1zM5 13h3v1h-3zM9 13h1v1h-1zM10 14h1v1h-1z" fill="#000"/></svg></div><div class="t" style="left:1091px;top:105px;font-size:12px;letter-spacing:-0.3px;color:#999">SINAD (AES-17 Notch)&nbsp;&nbsp;6</div><div class="abs" style="left:1257px;top:110px;width:10px;height:1px;background:#a0a0a0"></div><div class="abs" style="left:1302px;top:105px;width:10px;height:10px;border:1px solid #a0a0a0"></div><svg class="abs" style="left:1347px;top:105px" width="11" height="11"><path d="M0.5 0.5 L10.5 10.5 M10.5 0.5 L0.5 10.5" stroke="#a0a0a0" stroke-width="1"/></svg><div class="abs" style="left:1062px;top:126px;width:315px;height:122px;background:#0080ff"></div><div class="t" style="left:1064.16px;top:140.27px;font-family:'Liberation Mono',monospace;font-weight:bold;font-size:99.26px;transform-origin:0 0;transform:scaleX(0.6534);white-space:pre">12O.7 <span style="display:inline-block;transform:scaleY(0.92);transform-origin:50% 77%">d</span>B</div><div class="abs" style="left:1061px;top:257px;width:316px;height:72px;border-left:1px solid #6a6a6a;border-top:1px solid #6a6a6a;background:#fff;box-shadow:1px 1px 7px 1px rgba(0,0,0,0.30)"></div><div class="abs" style="left:1062px;top:258px;width:315px;height:30px;background:linear-gradient(90deg,#fff 88%,#f7f7f7)"></div><div class="abs" style="left:1071px;top:265px;width:16px;height:16px"><svg width="16" height="16" viewBox="0 0 16 16" shape-rendering="crispEdges"><path d="M0 0h3v1h-3zM0 1h1v1h-1zM3 1h1v1h-1zM0 2h1v1h-1zM3 2h1v1h-1zM0 3h1v1h-1zM3 3h1v1h-1zM0 4h1v1h-1zM3 4h1v1h-1zM0 5h3v1h-3z" fill="#0000ff"/><path d="M5 0h3v1h-3zM5 1h1v1h-1zM8 1h1v1h-1zM5 2h1v1h-1zM8 2h1v1h-1zM5 3h1v1h-1zM8 3h1v1h-1zM5 4h1v1h-1zM8 4h1v1h-1zM5 5h3v1h-3z" fill="#ff0000"/><path d="M10 0h3v1h-3zM10 1h1v1h-1zM13 1h1v1h-1zM10 2h1v1h-1zM13 2h1v1h-1zM10 3h3v1h-3zM10 4h1v1h-1zM10 5h1v1h-1z" fill="#00ee00"/><path d="M5 7h3v1h-3zM4 8h1v1h-1zM8 8h1v1h-1zM3 9h1v1h-1zM6 9h1v1h-1zM9 9h1v1h-1zM3 10h1v1h-1zM5 10h3v1h-3zM9 10h1v1h-1zM3 11h1v1h-1zM6 11h1v1h-1zM9 11h1v1h-1zM4 12h1v1h-1zM8 12h1v1h-1zM5 13h3v1h-3zM9 13h1v1h-1zM10 14h1v1h-1z" fill="#000"/></svg></div><div class="t" style="left:1091px;top:267px;font-size:12px;letter-spacing:-0.3px;color:#999">THD (AES-17 Notch)</div><div class="abs" style="left:1257px;top:272px;width:10px;height:1px;background:#a0a0a0"></div><div class="abs" style="left:1302px;top:267px;width:10px;height:10px;border:1px solid #a0a0a0"></div><svg class="abs" style="left:1347px;top:267px" width="11" height="11"><path d="M0.5 0.5 L10.5 10.5 M10.5 0.5 L0.5 10.5" stroke="#a0a0a0" stroke-width="1"/></svg><div class="abs" style="left:1062px;top:288px;width:315px;height:41px;background:#dcdcdc"></div><div class="t" style="left:1071.38px;top:292.82px;font-family:'Liberation Mono',monospace;font-weight:bold;font-size:33.09px;transform-origin:0 0;transform:scaleX(1.7056);white-space:pre">−125.3 <span style="display:inline-block;transform:scaleY(0.92);transform-origin:50% 77%">d</span>B</div><div class="abs" style="left:1061px;top:338px;width:316px;height:72px;border-left:1px solid #6a6a6a;border-top:1px solid #6a6a6a;background:#fff;box-shadow:1px 1px 7px 1px rgba(0,0,0,0.30)"></div><div class="abs" style="left:1062px;top:339px;width:315px;height:30px;background:linear-gradient(90deg,#fff 88%,#f7f7f7)"></div><div class="abs" style="left:1071px;top:346px;width:16px;height:16px"><svg width="16" height="16" viewBox="0 0 16 16" shape-rendering="crispEdges"><path d="M0 0h3v1h-3zM0 1h1v1h-1zM3 1h1v1h-1zM0 2h1v1h-1zM3 2h1v1h-1zM0 3h1v1h-1zM3 3h1v1h-1zM0 4h1v1h-1zM3 4h1v1h-1zM0 5h3v1h-3z" fill="#0000ff"/><path d="M5 0h3v1h-3zM5 1h1v1h-1zM8 1h1v1h-1zM5 2h1v1h-1zM8 2h1v1h-1zM5 3h1v1h-1zM8 3h1v1h-1zM5 4h1v1h-1zM8 4h1v1h-1zM5 5h3v1h-3z" fill="#ff0000"/><path d="M10 0h3v1h-3zM10 1h1v1h-1zM13 1h1v1h-1zM10 2h1v1h-1zM13 2h1v1h-1zM10 3h3v1h-3zM10 4h1v1h-1zM10 5h1v1h-1z" fill="#00ee00"/><path d="M5 7h3v1h-3zM4 8h1v1h-1zM8 8h1v1h-1zM3 9h1v1h-1zM6 9h1v1h-1zM9 9h1v1h-1zM3 10h1v1h-1zM5 10h3v1h-3zM9 10h1v1h-1zM3 11h1v1h-1zM6 11h1v1h-1zM9 11h1v1h-1zM4 12h1v1h-1zM8 12h1v1h-1zM5 13h3v1h-3zM9 13h1v1h-1zM10 14h1v1h-1z" fill="#000"/></svg></div><div class="t" style="left:1091px;top:348px;font-size:12px;letter-spacing:-0.3px;color:#999">THD (%) (AES-17 Notch)</div><div class="abs" style="left:1257px;top:353px;width:10px;height:1px;background:#a0a0a0"></div><div class="abs" style="left:1302px;top:348px;width:10px;height:10px;border:1px solid #a0a0a0"></div><svg class="abs" style="left:1347px;top:348px" width="11" height="11"><path d="M0.5 0.5 L10.5 10.5 M10.5 0.5 L0.5 10.5" stroke="#a0a0a0" stroke-width="1"/></svg><div class="abs" style="left:1062px;top:369px;width:315px;height:41px;background:#dcdcdc"></div><div class="t" style="left:1067.17px;top:373.68px;font-family:'Liberation Mono',monospace;font-weight:bold;font-size:33.53px;transform-origin:0 0;transform:scaleX(1.5137);white-space:pre">O.OOOO54 %</div><div class="abs" style="left:1061px;top:419px;width:316px;height:72px;border-left:1px solid #6a6a6a;border-top:1px solid #6a6a6a;background:#fff;box-shadow:1px 1px 7px 1px rgba(0,0,0,0.30)"></div><div class="abs" style="left:1062px;top:420px;width:315px;height:30px;background:linear-gradient(90deg,#fff 88%,#f7f7f7)"></div><div class="abs" style="left:1071px;top:427px;width:16px;height:16px"><svg width="16" height="16" viewBox="0 0 16 16" shape-rendering="crispEdges"><path d="M0 0h3v1h-3zM0 1h1v1h-1zM3 1h1v1h-1zM0 2h1v1h-1zM3 2h1v1h-1zM0 3h1v1h-1zM3 3h1v1h-1zM0 4h1v1h-1zM3 4h1v1h-1zM0 5h3v1h-3z" fill="#0000ff"/><path d="M5 0h3v1h-3zM5 1h1v1h-1zM8 1h1v1h-1zM5 2h1v1h-1zM8 2h1v1h-1zM5 3h1v1h-1zM8 3h1v1h-1zM5 4h1v1h-1zM8 4h1v1h-1zM5 5h3v1h-3z" fill="#ff0000"/><path d="M10 0h3v1h-3zM10 1h1v1h-1zM13 1h1v1h-1zM10 2h1v1h-1zM13 2h1v1h-1zM10 3h3v1h-3zM10 4h1v1h-1zM10 5h1v1h-1z" fill="#00ee00"/><path d="M5 7h3v1h-3zM4 8h1v1h-1zM8 8h1v1h-1zM3 9h1v1h-1zM6 9h1v1h-1zM9 9h1v1h-1zM3 10h1v1h-1zM5 10h3v1h-3zM9 10h1v1h-1zM3 11h1v1h-1zM6 11h1v1h-1zM9 11h1v1h-1zM4 12h1v1h-1zM8 12h1v1h-1zM5 13h3v1h-3zM9 13h1v1h-1zM10 14h1v1h-1z" fill="#000"/></svg></div><div class="t" style="left:1091px;top:429px;font-size:12px;letter-spacing:-0.3px;color:#999">SNR (AES-17 Notch)&nbsp;&nbsp;6</div><div class="abs" style="left:1257px;top:434px;width:10px;height:1px;background:#a0a0a0"></div><div class="abs" style="left:1302px;top:429px;width:10px;height:10px;border:1px solid #a0a0a0"></div><svg class="abs" style="left:1347px;top:429px" width="11" height="11"><path d="M0.5 0.5 L10.5 10.5 M10.5 0.5 L0.5 10.5" stroke="#a0a0a0" stroke-width="1"/></svg><div class="abs" style="left:1062px;top:450px;width:315px;height:41px;background:#dcdcdc"></div><div class="t" style="left:1063.75px;top:454.82px;font-family:'Liberation Mono',monospace;font-weight:bold;font-size:33.09px;transform-origin:0 0;transform:scaleX(1.9660);white-space:pre">122.5 <span style="display:inline-block;transform:scaleY(0.92);transform-origin:50% 77%">d</span>B</div><div class="abs" style="left:1061px;top:499px;width:316px;height:69px;border-left:1px solid #6a6a6a;border-top:1px solid #6a6a6a;background:#fff;box-shadow:1px 1px 7px 1px rgba(0,0,0,0.30)"></div><div class="abs" style="left:1062px;top:500px;width:315px;height:30px;background:linear-gradient(90deg,#fff 88%,#f7f7f7)"></div><div class="abs" style="left:1071px;top:507px;width:16px;height:16px"><svg width="16" height="16" viewBox="0 0 16 16" shape-rendering="crispEdges"><path d="M0 0h3v1h-3zM0 1h1v1h-1zM3 1h1v1h-1zM0 2h1v1h-1zM3 2h1v1h-1zM0 3h1v1h-1zM3 3h1v1h-1zM0 4h1v1h-1zM3 4h1v1h-1zM0 5h3v1h-3z" fill="#0000ff"/><path d="M5 0h3v1h-3zM5 1h1v1h-1zM8 1h1v1h-1zM5 2h1v1h-1zM8 2h1v1h-1zM5 3h1v1h-1zM8 3h1v1h-1zM5 4h1v1h-1zM8 4h1v1h-1zM5 5h3v1h-3z" fill="#ff0000"/><path d="M10 0h3v1h-3zM10 1h1v1h-1zM13 1h1v1h-1zM10 2h1v1h-1zM13 2h1v1h-1zM10 3h3v1h-3zM10 4h1v1h-1zM10 5h1v1h-1z" fill="#00ee00"/><path d="M5 7h3v1h-3zM4 8h1v1h-1zM8 8h1v1h-1zM3 9h1v1h-1zM6 9h1v1h-1zM9 9h1v1h-1zM3 10h1v1h-1zM5 10h3v1h-3zM9 10h1v1h-1zM3 11h1v1h-1zM6 11h1v1h-1zM9 11h1v1h-1zM4 12h1v1h-1zM8 12h1v1h-1zM5 13h3v1h-3zM9 13h1v1h-1zM10 14h1v1h-1z" fill="#000"/></svg></div><div class="t" style="left:1091px;top:509px;font-size:12px;letter-spacing:-0.3px;color:#999">DAC Out (DMM)</div><div class="abs" style="left:1257px;top:514px;width:10px;height:1px;background:#a0a0a0"></div><div class="abs" style="left:1302px;top:509px;width:10px;height:10px;border:1px solid #a0a0a0"></div><svg class="abs" style="left:1347px;top:509px" width="11" height="11"><path d="M0.5 0.5 L10.5 10.5 M10.5 0.5 L0.5 10.5" stroke="#a0a0a0" stroke-width="1"/></svg><div class="abs" style="left:1062px;top:530px;width:315px;height:38px;background:#ababab"></div><div class="t" style="left:1068.47px;top:533.79px;font-family:'Liberation Mono',monospace;font-weight:bold;font-size:32.35px;transform-origin:0 0;transform:scaleX(1.4407);white-space:pre">3.4225 Vrms</div><div class="abs" style="left:1383px;top:95px;width:287px;height:72px;border-left:1px solid #6a6a6a;border-top:1px solid #6a6a6a;background:#fff;box-shadow:1px 1px 7px 1px rgba(0,0,0,0.30)"></div><div class="abs" style="left:1384px;top:96px;width:286px;height:30px;background:linear-gradient(90deg,#fff 88%,#f7f7f7)"></div><div class="abs" style="left:1393px;top:103px;width:16px;height:16px"><svg width="16" height="16" viewBox="0 0 16 16" shape-rendering="crispEdges"><path d="M0 0h3v1h-3zM0 1h1v1h-1zM3 1h1v1h-1zM0 2h1v1h-1zM3 2h1v1h-1zM0 3h1v1h-1zM3 3h1v1h-1zM0 4h1v1h-1zM3 4h1v1h-1zM0 5h3v1h-3z" fill="#0000ff"/><path d="M5 0h3v1h-3zM5 1h1v1h-1zM8 1h1v1h-1zM5 2h1v1h-1zM8 2h1v1h-1zM5 3h1v1h-1zM8 3h1v1h-1zM5 4h1v1h-1zM8 4h1v1h-1zM5 5h3v1h-3z" fill="#ff0000"/><path d="M10 0h3v1h-3zM10 1h1v1h-1zM13 1h1v1h-1zM10 2h1v1h-1zM13 2h1v1h-1zM10 3h3v1h-3zM10 4h1v1h-1zM10 5h1v1h-1z" fill="#00ee00"/><path d="M5 7h3v1h-3zM4 8h1v1h-1zM8 8h1v1h-1zM3 9h1v1h-1zM6 9h1v1h-1zM9 9h1v1h-1zM3 10h1v1h-1zM5 10h3v1h-3zM9 10h1v1h-1zM3 11h1v1h-1zM6 11h1v1h-1zM9 11h1v1h-1zM4 12h1v1h-1zM8 12h1v1h-1zM5 13h3v1h-3zM9 13h1v1h-1zM10 14h1v1h-1z" fill="#000"/></svg></div><div class="t" style="left:1413px;top:105px;font-size:12px;letter-spacing:-0.3px;color:#999">DAC Level (Mono)</div><div class="abs" style="left:1550px;top:110px;width:10px;height:1px;background:#a0a0a0"></div><div class="abs" style="left:1595px;top:105px;width:10px;height:10px;border:1px solid #a0a0a0"></div><svg class="abs" style="left:1640px;top:105px" width="11" height="11"><path d="M0.5 0.5 L10.5 10.5 M10.5 0.5 L0.5 10.5" stroke="#a0a0a0" stroke-width="1"/></svg><div class="abs" style="left:1384px;top:126px;width:286px;height:41px;background:#dcdcdc"></div><div class="t" style="left:1392.24px;top:131.00px;font-family:'Liberation Mono',monospace;font-weight:bold;font-size:33.38px;transform-origin:0 0;transform:scaleX(1.5338);white-space:pre">−2.5 <span style="display:inline-block;transform:scaleY(0.92);transform-origin:50% 77%">d</span>BFS</div><div class="abs" style="left:1383px;top:176px;width:287px;height:72px;border-left:1px solid #6a6a6a;border-top:1px solid #6a6a6a;background:#fff;box-shadow:1px 1px 7px 1px rgba(0,0,0,0.30)"></div><div class="abs" style="left:1384px;top:177px;width:286px;height:30px;background:linear-gradient(90deg,#fff 88%,#f7f7f7)"></div><div class="abs" style="left:1393px;top:184px;width:16px;height:16px"><svg width="16" height="16" viewBox="0 0 16 16" shape-rendering="crispEdges"><path d="M0 0h3v1h-3zM0 1h1v1h-1zM3 1h1v1h-1zM0 2h1v1h-1zM3 2h1v1h-1zM0 3h1v1h-1zM3 3h1v1h-1zM0 4h1v1h-1zM3 4h1v1h-1zM0 5h3v1h-3z" fill="#0000ff"/><path d="M5 0h3v1h-3zM5 1h1v1h-1zM8 1h1v1h-1zM5 2h1v1h-1zM8 2h1v1h-1zM5 3h1v1h-1zM8 3h1v1h-1zM5 4h1v1h-1zM8 4h1v1h-1zM5 5h3v1h-3z" fill="#ff0000"/><path d="M10 0h3v1h-3zM10 1h1v1h-1zM13 1h1v1h-1zM10 2h1v1h-1zM13 2h1v1h-1zM10 3h3v1h-3zM10 4h1v1h-1zM10 5h1v1h-1z" fill="#00ee00"/><path d="M5 7h3v1h-3zM4 8h1v1h-1zM8 8h1v1h-1zM3 9h1v1h-1zM6 9h1v1h-1zM9 9h1v1h-1zM3 10h1v1h-1zM5 10h3v1h-3zM9 10h1v1h-1zM3 11h1v1h-1zM6 11h1v1h-1zM9 11h1v1h-1zM4 12h1v1h-1zM8 12h1v1h-1zM5 13h3v1h-3zM9 13h1v1h-1zM10 14h1v1h-1z" fill="#000"/></svg></div><div class="t" style="left:1413px;top:186px;font-size:12px;letter-spacing:-0.3px;color:#999">ADC Level (dBFS)</div><div class="abs" style="left:1550px;top:191px;width:10px;height:1px;background:#a0a0a0"></div><div class="abs" style="left:1595px;top:186px;width:10px;height:10px;border:1px solid #a0a0a0"></div><svg class="abs" style="left:1640px;top:186px" width="11" height="11"><path d="M0.5 0.5 L10.5 10.5 M10.5 0.5 L0.5 10.5" stroke="#a0a0a0" stroke-width="1"/></svg><div class="abs" style="left:1384px;top:207px;width:286px;height:41px;background:#dcdcdc"></div><div class="t" style="left:1390.98px;top:211.80px;font-family:'Liberation Mono',monospace;font-weight:bold;font-size:33.38px;transform-origin:0 0;transform:scaleX(1.3875);white-space:pre">−1O.8 <span style="display:inline-block;transform:scaleY(0.92);transform-origin:50% 77%">d</span>BFS</div><div class="abs" style="left:1383px;top:257px;width:287px;height:72px;border-left:1px solid #6a6a6a;border-top:1px solid #6a6a6a;background:#fff;box-shadow:1px 1px 7px 1px rgba(0,0,0,0.30)"></div><div class="abs" style="left:1384px;top:258px;width:286px;height:30px;background:linear-gradient(90deg,#fff 88%,#f7f7f7)"></div><div class="abs" style="left:1393px;top:265px;width:16px;height:16px"><svg width="16" height="16" viewBox="0 0 16 16" shape-rendering="crispEdges"><path d="M0 0h3v1h-3zM0 1h1v1h-1zM3 1h1v1h-1zM0 2h1v1h-1zM3 2h1v1h-1zM0 3h1v1h-1zM3 3h1v1h-1zM0 4h1v1h-1zM3 4h1v1h-1zM0 5h3v1h-3z" fill="#0000ff"/><path d="M5 0h3v1h-3zM5 1h1v1h-1zM8 1h1v1h-1zM5 2h1v1h-1zM8 2h1v1h-1zM5 3h1v1h-1zM8 3h1v1h-1zM5 4h1v1h-1zM8 4h1v1h-1zM5 5h3v1h-3z" fill="#ff0000"/><path d="M10 0h3v1h-3zM10 1h1v1h-1zM13 1h1v1h-1zM10 2h1v1h-1zM13 2h1v1h-1zM10 3h3v1h-3zM10 4h1v1h-1zM10 5h1v1h-1z" fill="#00ee00"/><path d="M5 7h3v1h-3zM4 8h1v1h-1zM8 8h1v1h-1zM3 9h1v1h-1zM6 9h1v1h-1zM9 9h1v1h-1zM3 10h1v1h-1zM5 10h3v1h-3zM9 10h1v1h-1zM3 11h1v1h-1zM6 11h1v1h-1zM9 11h1v1h-1zM4 12h1v1h-1zM8 12h1v1h-1zM5 13h3v1h-3zM9 13h1v1h-1zM10 14h1v1h-1z" fill="#000"/></svg></div><div class="t" style="left:1413px;top:267px;font-size:12px;letter-spacing:-0.3px;color:#000">DAC Range</div><div class="abs" style="left:1550px;top:272px;width:10px;height:1px;background:#000"></div><div class="abs" style="left:1595px;top:267px;width:10px;height:10px;border:1px solid #000"></div><svg class="abs" style="left:1640px;top:267px" width="11" height="11"><path d="M0.5 0.5 L10.5 10.5 M10.5 0.5 L0.5 10.5" stroke="#000" stroke-width="1"/></svg><div class="abs" style="left:1384px;top:288px;width:286px;height:41px;background:#ababab"></div><div class="t" style="left:1389.88px;top:293.40px;font-family:'Liberation Mono',monospace;font-weight:bold;font-size:32.21px;transform-origin:0 0;transform:scaleX(1.8277);white-space:pre">15.4 <span style="display:inline-block;transform:scaleY(0.92);transform-origin:50% 77%">d</span>Bu</div><div class="abs" style="left:1383px;top:338px;width:287px;height:72px;border-left:1px solid #6a6a6a;border-top:1px solid #6a6a6a;background:#fff;box-shadow:1px 1px 7px 1px rgba(0,0,0,0.30)"></div><div class="abs" style="left:1384px;top:339px;width:286px;height:30px;background:linear-gradient(90deg,#fff 88%,#f7f7f7)"></div><div class="abs" style="left:1393px;top:346px;width:16px;height:16px"><svg width="16" height="16" viewBox="0 0 16 16" shape-rendering="crispEdges"><path d="M0 0h3v1h-3zM0 1h1v1h-1zM3 1h1v1h-1zM0 2h1v1h-1zM3 2h1v1h-1zM0 3h1v1h-1zM3 3h1v1h-1zM0 4h1v1h-1zM3 4h1v1h-1zM0 5h3v1h-3z" fill="#0000ff"/><path d="M5 0h3v1h-3zM5 1h1v1h-1zM8 1h1v1h-1zM5 2h1v1h-1zM8 2h1v1h-1zM5 3h1v1h-1zM8 3h1v1h-1zM5 4h1v1h-1zM8 4h1v1h-1zM5 5h3v1h-3z" fill="#ff0000"/><path d="M10 0h3v1h-3zM10 1h1v1h-1zM13 1h1v1h-1zM10 2h1v1h-1zM13 2h1v1h-1zM10 3h3v1h-3zM10 4h1v1h-1zM10 5h1v1h-1z" fill="#00ee00"/><path d="M5 7h3v1h-3zM4 8h1v1h-1zM8 8h1v1h-1zM3 9h1v1h-1zM6 9h1v1h-1zM9 9h1v1h-1zM3 10h1v1h-1zM5 10h3v1h-3zM9 10h1v1h-1zM3 11h1v1h-1zM6 11h1v1h-1zM9 11h1v1h-1zM4 12h1v1h-1zM8 12h1v1h-1zM5 13h3v1h-3zM9 13h1v1h-1zM10 14h1v1h-1z" fill="#000"/></svg></div><div class="t" style="left:1413px;top:348px;font-size:12px;letter-spacing:-0.3px;color:#999">ADC Range</div><div class="abs" style="left:1550px;top:353px;width:10px;height:1px;background:#a0a0a0"></div><div class="abs" style="left:1595px;top:348px;width:10px;height:10px;border:1px solid #a0a0a0"></div><svg class="abs" style="left:1640px;top:348px" width="11" height="11"><path d="M0.5 0.5 L10.5 10.5 M10.5 0.5 L0.5 10.5" stroke="#a0a0a0" stroke-width="1"/></svg><div class="abs" style="left:1384px;top:369px;width:286px;height:41px;background:#ababab"></div><div class="t" style="left:1388.45px;top:374.47px;font-family:'Liberation Mono',monospace;font-weight:bold;font-size:31.47px;transform-origin:0 0;transform:scaleX(2.5191);white-space:pre">19 <span style="display:inline-block;transform:scaleY(0.92);transform-origin:50% 77%">d</span>Bu</div><div class="abs" style="left:1383px;top:578px;width:287px;height:69px;border-left:1px solid #6a6a6a;border-top:1px solid #6a6a6a;background:#fff;box-shadow:1px 1px 7px 1px rgba(0,0,0,0.30)"></div><div class="abs" style="left:1384px;top:579px;width:286px;height:30px;background:linear-gradient(90deg,#fff 88%,#f7f7f7)"></div><div class="abs" style="left:1393px;top:586px;width:16px;height:16px"><svg width="16" height="16" viewBox="0 0 16 16" shape-rendering="crispEdges"><path d="M0 0h3v1h-3zM0 1h1v1h-1zM3 1h1v1h-1zM0 2h1v1h-1zM3 2h1v1h-1zM0 3h1v1h-1zM3 3h1v1h-1zM0 4h1v1h-1zM3 4h1v1h-1zM0 5h3v1h-3z" fill="#0000ff"/><path d="M5 0h3v1h-3zM5 1h1v1h-1zM8 1h1v1h-1zM5 2h1v1h-1zM8 2h1v1h-1zM5 3h1v1h-1zM8 3h1v1h-1zM5 4h1v1h-1zM8 4h1v1h-1zM5 5h3v1h-3z" fill="#ff0000"/><path d="M10 0h3v1h-3zM10 1h1v1h-1zM13 1h1v1h-1zM10 2h1v1h-1zM13 2h1v1h-1zM10 3h3v1h-3zM10 4h1v1h-1zM10 5h1v1h-1z" fill="#00ee00"/><path d="M5 7h3v1h-3zM4 8h1v1h-1zM8 8h1v1h-1zM3 9h1v1h-1zM6 9h1v1h-1zM9 9h1v1h-1zM3 10h1v1h-1zM5 10h3v1h-3zM9 10h1v1h-1zM3 11h1v1h-1zM6 11h1v1h-1zM9 11h1v1h-1zM4 12h1v1h-1zM8 12h1v1h-1zM5 13h3v1h-3zM9 13h1v1h-1zM10 14h1v1h-1z" fill="#000"/></svg></div><div class="t" style="left:1413px;top:588px;font-size:12px;letter-spacing:-0.3px;color:#999">DUT In (DMM)</div><div class="abs" style="left:1550px;top:593px;width:10px;height:1px;background:#a0a0a0"></div><div class="abs" style="left:1595px;top:588px;width:10px;height:10px;border:1px solid #a0a0a0"></div><svg class="abs" style="left:1640px;top:588px" width="11" height="11"><path d="M0.5 0.5 L10.5 10.5 M10.5 0.5 L0.5 10.5" stroke="#a0a0a0" stroke-width="1"/></svg><div class="abs" style="left:1384px;top:609px;width:286px;height:38px;background:#ababab"></div><div class="t" style="left:1384.44px;top:612.70px;font-family:'Liberation Mono',monospace;font-weight:bold;font-size:32.21px;transform-origin:0 0;transform:scaleX(1.3439);white-space:pre">3.4226 Vrms</div><div class="abs" style="left:1383px;top:656px;width:287px;height:69px;border-left:1px solid #6a6a6a;border-top:1px solid #6a6a6a;background:#fff;box-shadow:1px 1px 7px 1px rgba(0,0,0,0.30)"></div><div class="abs" style="left:1384px;top:657px;width:286px;height:30px;background:linear-gradient(90deg,#fff 88%,#f7f7f7)"></div><div class="abs" style="left:1393px;top:664px;width:16px;height:16px"><svg width="16" height="16" viewBox="0 0 16 16" shape-rendering="crispEdges"><path d="M0 0h3v1h-3zM0 1h1v1h-1zM3 1h1v1h-1zM0 2h1v1h-1zM3 2h1v1h-1zM0 3h1v1h-1zM3 3h1v1h-1zM0 4h1v1h-1zM3 4h1v1h-1zM0 5h3v1h-3z" fill="#0000ff"/><path d="M5 0h3v1h-3zM5 1h1v1h-1zM8 1h1v1h-1zM5 2h1v1h-1zM8 2h1v1h-1zM5 3h1v1h-1zM8 3h1v1h-1zM5 4h1v1h-1zM8 4h1v1h-1zM5 5h3v1h-3z" fill="#ff0000"/><path d="M10 0h3v1h-3zM10 1h1v1h-1zM13 1h1v1h-1zM10 2h1v1h-1zM13 2h1v1h-1zM10 3h3v1h-3zM10 4h1v1h-1zM10 5h1v1h-1z" fill="#00ee00"/><path d="M5 7h3v1h-3zM4 8h1v1h-1zM8 8h1v1h-1zM3 9h1v1h-1zM6 9h1v1h-1zM9 9h1v1h-1zM3 10h1v1h-1zM5 10h3v1h-3zM9 10h1v1h-1zM3 11h1v1h-1zM6 11h1v1h-1zM9 11h1v1h-1zM4 12h1v1h-1zM8 12h1v1h-1zM5 13h3v1h-3zM9 13h1v1h-1zM10 14h1v1h-1z" fill="#000"/></svg></div><div class="t" style="left:1413px;top:666px;font-size:12px;letter-spacing:-0.3px;color:#999">DUT Out (DMM)</div><div class="abs" style="left:1550px;top:671px;width:10px;height:1px;background:#a0a0a0"></div><div class="abs" style="left:1595px;top:666px;width:10px;height:10px;border:1px solid #a0a0a0"></div><svg class="abs" style="left:1640px;top:666px" width="11" height="11"><path d="M0.5 0.5 L10.5 10.5 M10.5 0.5 L0.5 10.5" stroke="#a0a0a0" stroke-width="1"/></svg><div class="abs" style="left:1384px;top:687px;width:286px;height:38px;background:#ababab"></div><div class="t" style="left:1384.44px;top:690.70px;font-family:'Liberation Mono',monospace;font-weight:bold;font-size:32.21px;transform-origin:0 0;transform:scaleX(1.3439);white-space:pre">3.4225 Vrms</div><div class="abs" style="left:1383px;top:734px;width:287px;height:69px;border-left:1px solid #6a6a6a;border-top:1px solid #6a6a6a;background:#fff;box-shadow:1px 1px 7px 1px rgba(0,0,0,0.30)"></div><div class="abs" style="left:1384px;top:735px;width:286px;height:30px;background:linear-gradient(90deg,#fff 88%,#f7f7f7)"></div><div class="abs" style="left:1393px;top:742px;width:16px;height:16px"><svg width="16" height="16" viewBox="0 0 16 16" shape-rendering="crispEdges"><path d="M0 0h3v1h-3zM0 1h1v1h-1zM3 1h1v1h-1zM0 2h1v1h-1zM3 2h1v1h-1zM0 3h1v1h-1zM3 3h1v1h-1zM0 4h1v1h-1zM3 4h1v1h-1zM0 5h3v1h-3z" fill="#0000ff"/><path d="M5 0h3v1h-3zM5 1h1v1h-1zM8 1h1v1h-1zM5 2h1v1h-1zM8 2h1v1h-1zM5 3h1v1h-1zM8 3h1v1h-1zM5 4h1v1h-1zM8 4h1v1h-1zM5 5h3v1h-3z" fill="#ff0000"/><path d="M10 0h3v1h-3zM10 1h1v1h-1zM13 1h1v1h-1zM10 2h1v1h-1zM13 2h1v1h-1zM10 3h3v1h-3zM10 4h1v1h-1zM10 5h1v1h-1z" fill="#00ee00"/><path d="M5 7h3v1h-3zM4 8h1v1h-1zM8 8h1v1h-1zM3 9h1v1h-1zM6 9h1v1h-1zM9 9h1v1h-1zM3 10h1v1h-1zM5 10h3v1h-3zM9 10h1v1h-1zM3 11h1v1h-1zM6 11h1v1h-1zM9 11h1v1h-1zM4 12h1v1h-1zM8 12h1v1h-1zM5 13h3v1h-3zM9 13h1v1h-1zM10 14h1v1h-1z" fill="#000"/></svg></div><div class="t" style="left:1413px;top:744px;font-size:12px;letter-spacing:-0.3px;color:#999">ADC In (DMM)</div><div class="abs" style="left:1550px;top:749px;width:10px;height:1px;background:#a0a0a0"></div><div class="abs" style="left:1595px;top:744px;width:10px;height:10px;border:1px solid #a0a0a0"></div><svg class="abs" style="left:1640px;top:744px" width="11" height="11"><path d="M0.5 0.5 L10.5 10.5 M10.5 0.5 L0.5 10.5" stroke="#a0a0a0" stroke-width="1"/></svg><div class="abs" style="left:1384px;top:765px;width:286px;height:38px;background:#ababab"></div><div class="t" style="left:1383.56px;top:768.70px;font-family:'Liberation Mono',monospace;font-weight:bold;font-size:32.21px;transform-origin:0 0;transform:scaleX(1.3481);white-space:pre">1.9795 Vrms</div><div class="abs" style="left:1383px;top:812px;width:287px;height:69px;border-left:1px solid #6a6a6a;border-top:1px solid #6a6a6a;background:#fff;box-shadow:1px 1px 7px 1px rgba(0,0,0,0.30)"></div><div class="abs" style="left:1384px;top:813px;width:286px;height:30px;background:linear-gradient(90deg,#fff 88%,#f7f7f7)"></div><div class="abs" style="left:1393px;top:820px;width:16px;height:16px"><svg width="16" height="16" viewBox="0 0 16 16" shape-rendering="crispEdges"><path d="M0 0h3v1h-3zM0 1h1v1h-1zM3 1h1v1h-1zM0 2h1v1h-1zM3 2h1v1h-1zM0 3h1v1h-1zM3 3h1v1h-1zM0 4h1v1h-1zM3 4h1v1h-1zM0 5h3v1h-3z" fill="#0000ff"/><path d="M5 0h3v1h-3zM5 1h1v1h-1zM8 1h1v1h-1zM5 2h1v1h-1zM8 2h1v1h-1zM5 3h1v1h-1zM8 3h1v1h-1zM5 4h1v1h-1zM8 4h1v1h-1zM5 5h3v1h-3z" fill="#ff0000"/><path d="M10 0h3v1h-3zM10 1h1v1h-1zM13 1h1v1h-1zM10 2h1v1h-1zM13 2h1v1h-1zM10 3h3v1h-3zM10 4h1v1h-1zM10 5h1v1h-1z" fill="#00ee00"/><path d="M5 7h3v1h-3zM4 8h1v1h-1zM8 8h1v1h-1zM3 9h1v1h-1zM6 9h1v1h-1zM9 9h1v1h-1zM3 10h1v1h-1zM5 10h3v1h-3zM9 10h1v1h-1zM3 11h1v1h-1zM6 11h1v1h-1zM9 11h1v1h-1zM4 12h1v1h-1zM8 12h1v1h-1zM5 13h3v1h-3zM9 13h1v1h-1zM10 14h1v1h-1z" fill="#000"/></svg></div><div class="t" style="left:1413px;top:822px;font-size:12px;letter-spacing:-0.3px;color:#999">DAC Out Gain</div><div class="abs" style="left:1550px;top:827px;width:10px;height:1px;background:#a0a0a0"></div><div class="abs" style="left:1595px;top:822px;width:10px;height:10px;border:1px solid #a0a0a0"></div><svg class="abs" style="left:1640px;top:822px" width="11" height="11"><path d="M0.5 0.5 L10.5 10.5 M10.5 0.5 L0.5 10.5" stroke="#a0a0a0" stroke-width="1"/></svg><div class="abs" style="left:1384px;top:843px;width:286px;height:38px;background:#ababab"></div><div class="t" style="left:1384.64px;top:847.11px;font-family:'Liberation Mono',monospace;font-weight:bold;font-size:31.03px;transform-origin:0 0;transform:scaleX(2.5463);white-space:pre">O.O <span style="display:inline-block;transform:scaleY(0.92);transform-origin:50% 77%">d</span>B</div><div class="abs" style="left:1383px;top:890px;width:287px;height:69px;border-left:1px solid #6a6a6a;border-top:1px solid #6a6a6a;background:#fff;box-shadow:1px 1px 7px 1px rgba(0,0,0,0.30)"></div><div class="abs" style="left:1384px;top:891px;width:286px;height:30px;background:linear-gradient(90deg,#fff 88%,#f7f7f7)"></div><div class="abs" style="left:1393px;top:898px;width:16px;height:16px"><svg width="16" height="16" viewBox="0 0 16 16" shape-rendering="crispEdges"><path d="M0 0h3v1h-3zM0 1h1v1h-1zM3 1h1v1h-1zM0 2h1v1h-1zM3 2h1v1h-1zM0 3h1v1h-1zM3 3h1v1h-1zM0 4h1v1h-1zM3 4h1v1h-1zM0 5h3v1h-3z" fill="#0000ff"/><path d="M5 0h3v1h-3zM5 1h1v1h-1zM8 1h1v1h-1zM5 2h1v1h-1zM8 2h1v1h-1zM5 3h1v1h-1zM8 3h1v1h-1zM5 4h1v1h-1zM8 4h1v1h-1zM5 5h3v1h-3z" fill="#ff0000"/><path d="M10 0h3v1h-3zM10 1h1v1h-1zM13 1h1v1h-1zM10 2h1v1h-1zM13 2h1v1h-1zM10 3h3v1h-3zM10 4h1v1h-1zM10 5h1v1h-1z" fill="#00ee00"/><path d="M5 7h3v1h-3zM4 8h1v1h-1zM8 8h1v1h-1zM3 9h1v1h-1zM6 9h1v1h-1zM9 9h1v1h-1zM3 10h1v1h-1zM5 10h3v1h-3zM9 10h1v1h-1zM3 11h1v1h-1zM6 11h1v1h-1zM9 11h1v1h-1zM4 12h1v1h-1zM8 12h1v1h-1zM5 13h3v1h-3zM9 13h1v1h-1zM10 14h1v1h-1z" fill="#000"/></svg></div><div class="t" style="left:1413px;top:900px;font-size:12px;letter-spacing:-0.3px;color:#999">DUT Gain</div><div class="abs" style="left:1550px;top:905px;width:10px;height:1px;background:#a0a0a0"></div><div class="abs" style="left:1595px;top:900px;width:10px;height:10px;border:1px solid #a0a0a0"></div><svg class="abs" style="left:1640px;top:900px" width="11" height="11"><path d="M0.5 0.5 L10.5 10.5 M10.5 0.5 L0.5 10.5" stroke="#a0a0a0" stroke-width="1"/></svg><div class="abs" style="left:1384px;top:921px;width:286px;height:38px;background:#ababab"></div><div class="t" style="left:1385.21px;top:925.11px;font-family:'Liberation Mono',monospace;font-weight:bold;font-size:31.03px;transform-origin:0 0;transform:scaleX(2.1826);white-space:pre">−O.O <span style="display:inline-block;transform:scaleY(0.92);transform-origin:50% 77%">d</span>B</div><div class="abs" style="left:1383px;top:968px;width:287px;height:69px;border-left:1px solid #6a6a6a;border-top:1px solid #6a6a6a;background:#fff;box-shadow:1px 1px 7px 1px rgba(0,0,0,0.30)"></div><div class="abs" style="left:1384px;top:969px;width:286px;height:30px;background:linear-gradient(90deg,#fff 88%,#f7f7f7)"></div><div class="abs" style="left:1393px;top:976px;width:16px;height:16px"><svg width="16" height="16" viewBox="0 0 16 16" shape-rendering="crispEdges"><path d="M0 0h3v1h-3zM0 1h1v1h-1zM3 1h1v1h-1zM0 2h1v1h-1zM3 2h1v1h-1zM0 3h1v1h-1zM3 3h1v1h-1zM0 4h1v1h-1zM3 4h1v1h-1zM0 5h3v1h-3z" fill="#0000ff"/><path d="M5 0h3v1h-3zM5 1h1v1h-1zM8 1h1v1h-1zM5 2h1v1h-1zM8 2h1v1h-1zM5 3h1v1h-1zM8 3h1v1h-1zM5 4h1v1h-1zM8 4h1v1h-1zM5 5h3v1h-3z" fill="#ff0000"/><path d="M10 0h3v1h-3zM10 1h1v1h-1zM13 1h1v1h-1zM10 2h1v1h-1zM13 2h1v1h-1zM10 3h3v1h-3zM10 4h1v1h-1zM10 5h1v1h-1z" fill="#00ee00"/><path d="M5 7h3v1h-3zM4 8h1v1h-1zM8 8h1v1h-1zM3 9h1v1h-1zM6 9h1v1h-1zM9 9h1v1h-1zM3 10h1v1h-1zM5 10h3v1h-3zM9 10h1v1h-1zM3 11h1v1h-1zM6 11h1v1h-1zM9 11h1v1h-1zM4 12h1v1h-1zM8 12h1v1h-1zM5 13h3v1h-3zM9 13h1v1h-1zM10 14h1v1h-1z" fill="#000"/></svg></div><div class="t" style="left:1413px;top:978px;font-size:12px;letter-spacing:-0.3px;color:#999">ADC IN Gain</div><div class="abs" style="left:1550px;top:983px;width:10px;height:1px;background:#a0a0a0"></div><div class="abs" style="left:1595px;top:978px;width:10px;height:10px;border:1px solid #a0a0a0"></div><svg class="abs" style="left:1640px;top:978px" width="11" height="11"><path d="M0.5 0.5 L10.5 10.5 M10.5 0.5 L0.5 10.5" stroke="#a0a0a0" stroke-width="1"/></svg><div class="abs" style="left:1384px;top:999px;width:286px;height:38px;background:#ababab"></div><div class="t" style="left:1385.21px;top:1003.11px;font-family:'Liberation Mono',monospace;font-weight:bold;font-size:31.03px;transform-origin:0 0;transform:scaleX(2.1826);white-space:pre">−4.8 <span style="display:inline-block;transform:scaleY(0.92);transform-origin:50% 77%">d</span>B</div><div class="abs" style="left:1677px;top:656px;width:240px;height:69px;border-left:1px solid #6a6a6a;border-top:1px solid #6a6a6a;background:#fff;box-shadow:1px 1px 7px 1px rgba(0,0,0,0.30)"></div><div class="abs" style="left:1678px;top:657px;width:239px;height:30px;background:linear-gradient(90deg,#fff 88%,#f7f7f7)"></div><div class="abs" style="left:1687px;top:664px;width:16px;height:16px"><svg width="16" height="16" viewBox="0 0 16 16" shape-rendering="crispEdges"><path d="M0 0h3v1h-3zM0 1h1v1h-1zM3 1h1v1h-1zM0 2h1v1h-1zM3 2h1v1h-1zM0 3h1v1h-1zM3 3h1v1h-1zM0 4h1v1h-1zM3 4h1v1h-1zM0 5h3v1h-3z" fill="#0000ff"/><path d="M5 0h3v1h-3zM5 1h1v1h-1zM8 1h1v1h-1zM5 2h1v1h-1zM8 2h1v1h-1zM5 3h1v1h-1zM8 3h1v1h-1zM5 4h1v1h-1zM8 4h1v1h-1zM5 5h3v1h-3z" fill="#ff0000"/><path d="M10 0h3v1h-3zM10 1h1v1h-1zM13 1h1v1h-1zM10 2h1v1h-1zM13 2h1v1h-1zM10 3h3v1h-3zM10 4h1v1h-1zM10 5h1v1h-1z" fill="#00ee00"/><path d="M5 7h3v1h-3zM4 8h1v1h-1zM8 8h1v1h-1zM3 9h1v1h-1zM6 9h1v1h-1zM9 9h1v1h-1zM3 10h1v1h-1zM5 10h3v1h-3zM9 10h1v1h-1zM3 11h1v1h-1zM6 11h1v1h-1zM9 11h1v1h-1zM4 12h1v1h-1zM8 12h1v1h-1zM5 13h3v1h-3zM9 13h1v1h-1zM10 14h1v1h-1z" fill="#000"/></svg></div><div class="t" style="left:1707px;top:666px;font-size:12px;letter-spacing:-0.3px;color:#999">Crest Facto...</div><div class="abs" style="left:1797px;top:671px;width:10px;height:1px;background:#a0a0a0"></div><div class="abs" style="left:1842px;top:666px;width:10px;height:10px;border:1px solid #a0a0a0"></div><svg class="abs" style="left:1887px;top:666px" width="11" height="11"><path d="M0.5 0.5 L10.5 10.5 M10.5 0.5 L0.5 10.5" stroke="#a0a0a0" stroke-width="1"/></svg><div class="abs" style="left:1678px;top:687px;width:239px;height:38px;background:#dcdcdc"></div><div class="t" style="left:1713.18px;top:691.47px;font-family:'Liberation Mono',monospace;font-weight:bold;font-size:30.29px;transform-origin:0 0;transform:scaleX(1.8600);white-space:pre">3.O <span style="display:inline-block;transform:scaleY(0.92);transform-origin:50% 77%">d</span>B</div><div class="abs" style="left:1677px;top:734px;width:240px;height:69px;border-left:1px solid #6a6a6a;border-top:1px solid #6a6a6a;background:#fff;box-shadow:1px 1px 7px 1px rgba(0,0,0,0.30)"></div><div class="abs" style="left:1678px;top:735px;width:239px;height:30px;background:linear-gradient(90deg,#fff 88%,#f7f7f7)"></div><div class="abs" style="left:1687px;top:742px;width:16px;height:16px"><svg width="16" height="16" viewBox="0 0 16 16" shape-rendering="crispEdges"><path d="M0 0h3v1h-3zM0 1h1v1h-1zM3 1h1v1h-1zM0 2h1v1h-1zM3 2h1v1h-1zM0 3h1v1h-1zM3 3h1v1h-1zM0 4h1v1h-1zM3 4h1v1h-1zM0 5h3v1h-3z" fill="#0000ff"/><path d="M5 0h3v1h-3zM5 1h1v1h-1zM8 1h1v1h-1zM5 2h1v1h-1zM8 2h1v1h-1zM5 3h1v1h-1zM8 3h1v1h-1zM5 4h1v1h-1zM8 4h1v1h-1zM5 5h3v1h-3z" fill="#ff0000"/><path d="M10 0h3v1h-3zM10 1h1v1h-1zM13 1h1v1h-1zM10 2h1v1h-1zM13 2h1v1h-1zM10 3h3v1h-3zM10 4h1v1h-1zM10 5h1v1h-1z" fill="#00ee00"/><path d="M5 7h3v1h-3zM4 8h1v1h-1zM8 8h1v1h-1zM3 9h1v1h-1zM6 9h1v1h-1zM9 9h1v1h-1zM3 10h1v1h-1zM5 10h3v1h-3zM9 10h1v1h-1zM3 11h1v1h-1zM6 11h1v1h-1zM9 11h1v1h-1zM4 12h1v1h-1zM8 12h1v1h-1zM5 13h3v1h-3zM9 13h1v1h-1zM10 14h1v1h-1z" fill="#000"/></svg></div><div class="t" style="left:1707px;top:744px;font-size:12px;letter-spacing:-0.3px;color:#999">SINAD&nbsp;&nbsp;6</div><div class="abs" style="left:1797px;top:749px;width:10px;height:1px;background:#a0a0a0"></div><div class="abs" style="left:1842px;top:744px;width:10px;height:10px;border:1px solid #a0a0a0"></div><svg class="abs" style="left:1887px;top:744px" width="11" height="11"><path d="M0.5 0.5 L10.5 10.5 M10.5 0.5 L0.5 10.5" stroke="#a0a0a0" stroke-width="1"/></svg><div class="abs" style="left:1678px;top:765px;width:239px;height:38px;background:#dcdcdc"></div><div class="t" style="left:1684.02px;top:769.47px;font-family:'Liberation Mono',monospace;font-weight:bold;font-size:30.29px;transform-origin:0 0;transform:scaleX(1.5944);white-space:pre">118.1 <span style="display:inline-block;transform:scaleY(0.92);transform-origin:50% 77%">d</span>B</div><div class="abs" style="left:1677px;top:812px;width:240px;height:69px;border-left:1px solid #6a6a6a;border-top:1px solid #6a6a6a;background:#fff;box-shadow:1px 1px 7px 1px rgba(0,0,0,0.30)"></div><div class="abs" style="left:1678px;top:813px;width:239px;height:30px;background:linear-gradient(90deg,#fff 88%,#f7f7f7)"></div><div class="abs" style="left:1687px;top:820px;width:16px;height:16px"><svg width="16" height="16" viewBox="0 0 16 16" shape-rendering="crispEdges"><path d="M0 0h3v1h-3zM0 1h1v1h-1zM3 1h1v1h-1zM0 2h1v1h-1zM3 2h1v1h-1zM0 3h1v1h-1zM3 3h1v1h-1zM0 4h1v1h-1zM3 4h1v1h-1zM0 5h3v1h-3z" fill="#0000ff"/><path d="M5 0h3v1h-3zM5 1h1v1h-1zM8 1h1v1h-1zM5 2h1v1h-1zM8 2h1v1h-1zM5 3h1v1h-1zM8 3h1v1h-1zM5 4h1v1h-1zM8 4h1v1h-1zM5 5h3v1h-3z" fill="#ff0000"/><path d="M10 0h3v1h-3zM10 1h1v1h-1zM13 1h1v1h-1zM10 2h1v1h-1zM13 2h1v1h-1zM10 3h3v1h-3zM10 4h1v1h-1zM10 5h1v1h-1z" fill="#00ee00"/><path d="M5 7h3v1h-3zM4 8h1v1h-1zM8 8h1v1h-1zM3 9h1v1h-1zM6 9h1v1h-1zM9 9h1v1h-1zM3 10h1v1h-1zM5 10h3v1h-3zM9 10h1v1h-1zM3 11h1v1h-1zM6 11h1v1h-1zM9 11h1v1h-1zM4 12h1v1h-1zM8 12h1v1h-1zM5 13h3v1h-3zM9 13h1v1h-1zM10 14h1v1h-1z" fill="#000"/></svg></div><div class="t" style="left:1707px;top:822px;font-size:12px;letter-spacing:-0.3px;color:#999">THD</div><div class="abs" style="left:1797px;top:827px;width:10px;height:1px;background:#a0a0a0"></div><div class="abs" style="left:1842px;top:822px;width:10px;height:10px;border:1px solid #a0a0a0"></div><svg class="abs" style="left:1887px;top:822px" width="11" height="11"><path d="M0.5 0.5 L10.5 10.5 M10.5 0.5 L0.5 10.5" stroke="#a0a0a0" stroke-width="1"/></svg><div class="abs" style="left:1678px;top:843px;width:239px;height:38px;background:#dcdcdc"></div><div class="t" style="left:1683.35px;top:847.47px;font-family:'Liberation Mono',monospace;font-weight:bold;font-size:30.29px;transform-origin:0 0;transform:scaleX(1.4207);white-space:pre">−125.3 <span style="display:inline-block;transform:scaleY(0.92);transform-origin:50% 77%">d</span>B</div><div class="abs" style="left:1677px;top:890px;width:240px;height:69px;border-left:1px solid #6a6a6a;border-top:1px solid #6a6a6a;background:#fff;box-shadow:1px 1px 7px 1px rgba(0,0,0,0.30)"></div><div class="abs" style="left:1678px;top:891px;width:239px;height:30px;background:linear-gradient(90deg,#fff 88%,#f7f7f7)"></div><div class="abs" style="left:1687px;top:898px;width:16px;height:16px"><svg width="16" height="16" viewBox="0 0 16 16" shape-rendering="crispEdges"><path d="M0 0h3v1h-3zM0 1h1v1h-1zM3 1h1v1h-1zM0 2h1v1h-1zM3 2h1v1h-1zM0 3h1v1h-1zM3 3h1v1h-1zM0 4h1v1h-1zM3 4h1v1h-1zM0 5h3v1h-3z" fill="#0000ff"/><path d="M5 0h3v1h-3zM5 1h1v1h-1zM8 1h1v1h-1zM5 2h1v1h-1zM8 2h1v1h-1zM5 3h1v1h-1zM8 3h1v1h-1zM5 4h1v1h-1zM8 4h1v1h-1zM5 5h3v1h-3z" fill="#ff0000"/><path d="M10 0h3v1h-3zM10 1h1v1h-1zM13 1h1v1h-1zM10 2h1v1h-1zM13 2h1v1h-1zM10 3h3v1h-3zM10 4h1v1h-1zM10 5h1v1h-1z" fill="#00ee00"/><path d="M5 7h3v1h-3zM4 8h1v1h-1zM8 8h1v1h-1zM3 9h1v1h-1zM6 9h1v1h-1zM9 9h1v1h-1zM3 10h1v1h-1zM5 10h3v1h-3zM9 10h1v1h-1zM3 11h1v1h-1zM6 11h1v1h-1zM9 11h1v1h-1zM4 12h1v1h-1zM8 12h1v1h-1zM5 13h3v1h-3zM9 13h1v1h-1zM10 14h1v1h-1z" fill="#000"/></svg></div><div class="t" style="left:1707px;top:900px;font-size:12px;letter-spacing:-0.3px;color:#999">THD (%)</div><div class="abs" style="left:1797px;top:905px;width:10px;height:1px;background:#a0a0a0"></div><div class="abs" style="left:1842px;top:900px;width:10px;height:10px;border:1px solid #a0a0a0"></div><svg class="abs" style="left:1887px;top:900px" width="11" height="11"><path d="M0.5 0.5 L10.5 10.5 M10.5 0.5 L0.5 10.5" stroke="#a0a0a0" stroke-width="1"/></svg><div class="abs" style="left:1678px;top:921px;width:239px;height:38px;background:#dcdcdc"></div><div class="t" style="left:1686.49px;top:925.47px;font-family:'Liberation Mono',monospace;font-weight:bold;font-size:30.29px;transform-origin:0 0;transform:scaleX(1.2462);white-space:pre">O.OOOO54 %</div><div class="abs" style="left:1677px;top:968px;width:240px;height:69px;border-left:1px solid #6a6a6a;border-top:1px solid #6a6a6a;background:#fff;box-shadow:1px 1px 7px 1px rgba(0,0,0,0.30)"></div><div class="abs" style="left:1678px;top:969px;width:239px;height:30px;background:linear-gradient(90deg,#fff 88%,#f7f7f7)"></div><div class="abs" style="left:1687px;top:976px;width:16px;height:16px"><svg width="16" height="16" viewBox="0 0 16 16" shape-rendering="crispEdges"><path d="M0 0h3v1h-3zM0 1h1v1h-1zM3 1h1v1h-1zM0 2h1v1h-1zM3 2h1v1h-1zM0 3h1v1h-1zM3 3h1v1h-1zM0 4h1v1h-1zM3 4h1v1h-1zM0 5h3v1h-3z" fill="#0000ff"/><path d="M5 0h3v1h-3zM5 1h1v1h-1zM8 1h1v1h-1zM5 2h1v1h-1zM8 2h1v1h-1zM5 3h1v1h-1zM8 3h1v1h-1zM5 4h1v1h-1zM8 4h1v1h-1zM5 5h3v1h-3z" fill="#ff0000"/><path d="M10 0h3v1h-3zM10 1h1v1h-1zM13 1h1v1h-1zM10 2h1v1h-1zM13 2h1v1h-1zM10 3h3v1h-3zM10 4h1v1h-1zM10 5h1v1h-1z" fill="#00ee00"/><path d="M5 7h3v1h-3zM4 8h1v1h-1zM8 8h1v1h-1zM3 9h1v1h-1zM6 9h1v1h-1zM9 9h1v1h-1zM3 10h1v1h-1zM5 10h3v1h-3zM9 10h1v1h-1zM3 11h1v1h-1zM6 11h1v1h-1zM9 11h1v1h-1zM4 12h1v1h-1zM8 12h1v1h-1zM5 13h3v1h-3zM9 13h1v1h-1zM10 14h1v1h-1z" fill="#000"/></svg></div><div class="t" style="left:1707px;top:978px;font-size:12px;letter-spacing:-0.3px;color:#999">SNR (dB)&nbsp;&nbsp;6</div><div class="abs" style="left:1797px;top:983px;width:10px;height:1px;background:#a0a0a0"></div><div class="abs" style="left:1842px;top:978px;width:10px;height:10px;border:1px solid #a0a0a0"></div><svg class="abs" style="left:1887px;top:978px" width="11" height="11"><path d="M0.5 0.5 L10.5 10.5 M10.5 0.5 L0.5 10.5" stroke="#a0a0a0" stroke-width="1"/></svg><div class="abs" style="left:1678px;top:999px;width:239px;height:38px;background:#dcdcdc"></div><div class="t" style="left:1684.02px;top:1003.47px;font-family:'Liberation Mono',monospace;font-weight:bold;font-size:30.29px;transform-origin:0 0;transform:scaleX(1.5944);white-space:pre">119.O <span style="display:inline-block;transform:scaleY(0.92);transform-origin:50% 77%">d</span>B</div><div class="abs" style="left:1061px;top:578px;width:316px;height:459px;border-left:1px solid #6a6a6a;border-top:1px solid #6a6a6a;background:#fff;box-shadow:1px 1px 7px 1px rgba(0,0,0,0.30)"></div><div class="abs" style="left:1062px;top:579px;width:315px;height:30px;background:linear-gradient(90deg,#fff 88%,#f7f7f7)"></div><div class="abs" style="left:1071px;top:586px;width:16px;height:16px"><svg width="16" height="16" viewBox="0 0 16 16" shape-rendering="crispEdges"><path d="M0 0h3v1h-3zM0 1h1v1h-1zM3 1h1v1h-1zM0 2h1v1h-1zM3 2h1v1h-1zM0 3h1v1h-1zM3 3h1v1h-1zM0 4h1v1h-1zM3 4h1v1h-1zM0 5h3v1h-3z" fill="#0000ff"/><path d="M5 0h3v1h-3zM5 1h1v1h-1zM8 1h1v1h-1zM5 2h1v1h-1zM8 2h1v1h-1zM5 3h1v1h-1zM8 3h1v1h-1zM5 4h1v1h-1zM8 4h1v1h-1zM5 5h3v1h-3z" fill="#ff0000"/><path d="M10 0h3v1h-3zM10 1h1v1h-1zM13 1h1v1h-1zM10 2h1v1h-1zM13 2h1v1h-1zM10 3h3v1h-3zM10 4h1v1h-1zM10 5h1v1h-1z" fill="#00ee00"/><path d="M0 7h15v1h-15zM0 8h1v1h-1zM5 8h1v1h-1zM10 8h1v1h-1zM14 8h1v1h-1zM0 9h1v1h-1zM5 9h1v1h-1zM10 9h1v1h-1zM14 9h1v1h-1zM0 10h15v1h-15zM0 11h1v1h-1zM5 11h1v1h-1zM10 11h1v1h-1zM14 11h1v1h-1zM0 12h1v1h-1zM5 12h1v1h-1zM10 12h1v1h-1zM14 12h1v1h-1zM0 13h15v1h-15z" fill="#606060"/></svg></div><div class="t" style="left:1091px;top:588px;font-size:12px;letter-spacing:-0.3px;color:#999">A-Frequency Bands, RMS</div><div class="abs" style="left:1257px;top:593px;width:10px;height:1px;background:#a0a0a0"></div><div class="abs" style="left:1302px;top:588px;width:10px;height:10px;border:1px solid #a0a0a0"></div><svg class="abs" style="left:1347px;top:588px" width="11" height="11"><path d="M0.5 0.5 L10.5 10.5 M10.5 0.5 L0.5 10.5" stroke="#a0a0a0" stroke-width="1"/></svg><div class="abs" style="left:1062px;top:610px;width:314px;height:427px;background:#f0f0f0"></div><div class="abs" style="left:1063px;top:611px;width:312px;height:424px;background:#f0f0f0;border:1px solid #a0a0a0;border-right-color:#fff;border-bottom-color:#fff;box-shadow:inset 1px 1px 0 #696969"></div><div class="abs" style="left:1065px;top:613px;width:208px;height:16px;background:#f0f0f0;border:1px solid #fff;border-right-color:#696969;border-bottom-color:#696969;box-shadow:inset -1px -1px 0 #a0a0a0"></div><div class="abs" style="left:1273px;top:613px;width:83px;height:16px;background:#f0f0f0;border:1px solid #fff;border-right-color:#696969;border-bottom-color:#696969;box-shadow:inset -1px -1px 0 #a0a0a0"></div><div class="t" style="left:1071px;top:615px;font-size:11px">Freq. (Hz)</div><div class="t" style="left:1279px;top:615px;font-size:11px">RMS (dBFS)</div><div class="abs" style="left:1065px;top:629px;width:291px;height:389px;background:#f0f0f0;overflow:hidden"><div class="abs" style="left:0;top:0px;width:207px;height:16px;background:#dcdcdc"></div><div class="abs" style="left:209px;top:0px;width:82px;height:16px;background:#dcdcdc"></div><div class="t" style="left:6px;top:3px;font-size:11px;color:#000">706.05 Hz~1.41211 kHz</div><div class="t" style="left:214px;top:3px;font-size:11px;color:#000;letter-spacing:-0.2px">-10.91 dBFS</div><div class="abs" style="left:0;top:17px;width:207px;height:16px;background:#dcdcdc"></div><div class="abs" style="left:209px;top:17px;width:82px;height:16px;background:#dcdcdc"></div><div class="t" style="left:6px;top:20px;font-size:11px;color:#000">1.98193 kHz~2.00977 kHz</div><div class="t" style="left:214px;top:20px;font-size:11px;color:#000;letter-spacing:-0.2px">-139.90 dBFS</div><div class="abs" style="left:0;top:34px;width:207px;height:16px;background:#dcdcdc"></div><div class="abs" style="left:209px;top:34px;width:82px;height:16px;background:#dcdcdc"></div><div class="t" style="left:6px;top:37px;font-size:11px;color:#000">2.97949 kHz~3.00732 kHz</div><div class="t" style="left:214px;top:37px;font-size:11px;color:#000;letter-spacing:-0.2px">-149.61 dBFS</div><div class="abs" style="left:0;top:51px;width:207px;height:16px;background:#dcdcdc"></div><div class="abs" style="left:209px;top:51px;width:82px;height:16px;background:#dcdcdc"></div><div class="t" style="left:6px;top:54px;font-size:11px;color:#000">3.97705 kHz~4.00488 kHz</div><div class="t" style="left:214px;top:54px;font-size:11px;color:#000;letter-spacing:-0.2px">-143.78 dBFS</div><div class="abs" style="left:0;top:68px;width:207px;height:16px;background:#dcdcdc"></div><div class="abs" style="left:209px;top:68px;width:82px;height:16px;background:#dcdcdc"></div><div class="t" style="left:6px;top:71px;font-size:11px;color:#000">4.97461 kHz~5.00244 kHz</div><div class="t" style="left:214px;top:71px;font-size:11px;color:#000;letter-spacing:-0.2px">-145.31 dBFS</div><div class="abs" style="left:0;top:85px;width:207px;height:16px;background:#dcdcdc"></div><div class="abs" style="left:209px;top:85px;width:82px;height:16px;background:#dcdcdc"></div><div class="t" style="left:6px;top:88px;font-size:11px;color:#000">5.97200 kHz~6.00000 kHz</div><div class="t" style="left:214px;top:88px;font-size:11px;color:#000;letter-spacing:-0.2px">-150.89 dBFS</div><div class="abs" style="left:0;top:102px;width:207px;height:16px;background:#dcdcdc"></div><div class="abs" style="left:209px;top:102px;width:82px;height:16px;background:#dcdcdc"></div><div class="t" style="left:6px;top:105px;font-size:11px;color:#000">6.96973 kHz~6.99756 kHz</div><div class="t" style="left:214px;top:105px;font-size:11px;color:#000;letter-spacing:-0.2px">-145.43 dBFS</div><div class="abs" style="left:0;top:119px;width:207px;height:16px;background:#dcdcdc"></div><div class="abs" style="left:209px;top:119px;width:82px;height:16px;background:#dcdcdc"></div><div class="t" style="left:6px;top:122px;font-size:11px;color:#000">7.96729 kHz~7.99512 kHz</div><div class="t" style="left:214px;top:122px;font-size:11px;color:#000;letter-spacing:-0.2px">-153.19 dBFS</div><div class="abs" style="left:0;top:136px;width:207px;height:16px;background:#dcdcdc"></div><div class="abs" style="left:209px;top:136px;width:82px;height:16px;background:#dcdcdc"></div><div class="t" style="left:6px;top:139px;font-size:11px;color:#000">8.96484 kHz~8.99268 kHz</div><div class="t" style="left:214px;top:139px;font-size:11px;color:#000;letter-spacing:-0.2px">-158.14 dBFS</div><div class="abs" style="left:0;top:153px;width:207px;height:16px;background:#dcdcdc"></div><div class="abs" style="left:209px;top:153px;width:82px;height:16px;background:#dcdcdc"></div><div class="t" style="left:6px;top:156px;font-size:11px;color:#000">9.96240 kHz~9.99023 kHz</div><div class="t" style="left:214px;top:156px;font-size:11px;color:#000;letter-spacing:-0.2px">-156.51 dBFS</div><div class="abs" style="left:0;top:170px;width:207px;height:16px;background:#dcdcdc"></div><div class="abs" style="left:209px;top:170px;width:82px;height:16px;background:#dcdcdc"></div><div class="t" style="left:6px;top:173px;font-size:11px;color:#000">10.96000 kHz~10.98780 kHz</div><div class="t" style="left:214px;top:173px;font-size:11px;color:#000;letter-spacing:-0.2px">-159.25 dBFS</div><div class="abs" style="left:0;top:187px;width:207px;height:16px;background:#dcdcdc"></div><div class="abs" style="left:209px;top:187px;width:82px;height:16px;background:#dcdcdc"></div><div class="t" style="left:6px;top:190px;font-size:11px;color:#000">11.95750 kHz~11.98540 kHz</div><div class="t" style="left:214px;top:190px;font-size:11px;color:#000;letter-spacing:-0.2px">-160.25 dBFS</div><div class="abs" style="left:0;top:204px;width:207px;height:16px;background:#dcdcdc"></div><div class="abs" style="left:209px;top:204px;width:82px;height:16px;background:#dcdcdc"></div><div class="t" style="left:6px;top:207px;font-size:11px;color:#000">12.95510 kHz~12.98290 kHz</div><div class="t" style="left:214px;top:207px;font-size:11px;color:#000;letter-spacing:-0.2px">-158.31 dBFS</div><div class="abs" style="left:0;top:221px;width:207px;height:16px;background:#dcdcdc"></div><div class="abs" style="left:209px;top:221px;width:82px;height:16px;background:#dcdcdc"></div><div class="t" style="left:6px;top:224px;font-size:11px;color:#000">13.95260 kHz~13.98050 kHz</div><div class="t" style="left:214px;top:224px;font-size:11px;color:#000;letter-spacing:-0.2px">-160.79 dBFS</div><div class="abs" style="left:0;top:238px;width:207px;height:16px;background:#dcdcdc"></div><div class="abs" style="left:209px;top:238px;width:82px;height:16px;background:#dcdcdc"></div><div class="t" style="left:6px;top:241px;font-size:11px;color:#000">14.95000 kHz~14.97800 kHz</div><div class="t" style="left:214px;top:241px;font-size:11px;color:#000;letter-spacing:-0.2px">-160.63 dBFS</div><div class="abs" style="left:0;top:255px;width:207px;height:16px;background:#dcdcdc"></div><div class="abs" style="left:209px;top:255px;width:82px;height:16px;background:#dcdcdc"></div><div class="t" style="left:6px;top:258px;font-size:11px;color:#000">15.94780 kHz~15.97560 kHz</div><div class="t" style="left:214px;top:258px;font-size:11px;color:#000;letter-spacing:-0.2px">-160.16 dBFS</div><div class="abs" style="left:0;top:272px;width:207px;height:16px;background:#dcdcdc"></div><div class="abs" style="left:209px;top:272px;width:82px;height:16px;background:#dcdcdc"></div><div class="t" style="left:6px;top:275px;font-size:11px;color:#000">16.94530 kHz~16.97310 kHz</div><div class="t" style="left:214px;top:275px;font-size:11px;color:#000;letter-spacing:-0.2px">-161.72 dBFS</div><div class="abs" style="left:0;top:289px;width:207px;height:16px;background:#dcdcdc"></div><div class="abs" style="left:209px;top:289px;width:82px;height:16px;background:#dcdcdc"></div><div class="t" style="left:6px;top:292px;font-size:11px;color:#000">17.94290 kHz~17.97070 kHz</div><div class="t" style="left:214px;top:292px;font-size:11px;color:#000;letter-spacing:-0.2px">-162.76 dBFS</div><div class="abs" style="left:0;top:306px;width:207px;height:16px;background:#dcdcdc"></div><div class="abs" style="left:209px;top:306px;width:82px;height:16px;background:#dcdcdc"></div><div class="t" style="left:6px;top:309px;font-size:11px;color:#000">18.94040 kHz~18.96830 kHz</div><div class="t" style="left:214px;top:309px;font-size:11px;color:#000;letter-spacing:-0.2px">-161.79 dBFS</div><div class="abs" style="left:0;top:323px;width:207px;height:16px;background:#dcdcdc"></div><div class="abs" style="left:209px;top:323px;width:82px;height:16px;background:#dcdcdc"></div><div class="t" style="left:6px;top:326px;font-size:11px;color:#000">19.93800 kHz~19.96580 kHz</div><div class="t" style="left:214px;top:326px;font-size:11px;color:#000;letter-spacing:-0.2px">-162.59 dBFS</div><div class="abs" style="left:0;top:340px;width:207px;height:16px;background:#dcdcdc"></div><div class="abs" style="left:209px;top:340px;width:82px;height:16px;background:#dcdcdc"></div><div class="t" style="left:6px;top:343px;font-size:11px;color:#000">20.51 Hz~20.00100 kHz</div><div class="t" style="left:214px;top:343px;font-size:11px;color:#000;letter-spacing:-0.2px">-10.91 dBFS</div><div class="abs" style="left:0;top:357px;width:207px;height:16px;background:#dcdcdc"></div><div class="abs" style="left:209px;top:357px;width:82px;height:16px;background:#dcdcdc"></div><div class="t" style="left:6px;top:360px;font-size:11px;color:#000">20.51 Hz~706.05 Hz</div><div class="t" style="left:214px;top:360px;font-size:11px;color:#000;letter-spacing:-0.2px">-143.15 dBFS</div><div class="abs" style="left:0;top:374px;width:207px;height:16px;background:#dcdcdc"></div><div class="abs" style="left:209px;top:374px;width:82px;height:16px;background:#dcdcdc"></div><div class="t" style="left:6px;top:377px;font-size:11px;color:#000">1.41210 kHz~20.00100 kHz</div><div class="t" style="left:214px;top:377px;font-size:11px;color:#000;letter-spacing:-0.2px">-131.88 dBFS</div></div><div class="abs" style="left:1356px;top:613px;width:17px;height:405px;background:#f0f0f0"></div><div class="abs" style="left:1357px;top:629px;width:15px;height:186px;background:#cdcdcd"></div><svg class="abs" style="left:1359px;top:617px" width="11" height="8"><path d="M1.5 6 L5.5 2 L9.5 6" stroke="#606060" stroke-width="1.5" fill="none"/></svg><svg class="abs" style="left:1359px;top:1005px" width="11" height="8"><path d="M1.5 2 L5.5 6 L9.5 2" stroke="#606060" stroke-width="1.5" fill="none"/></svg><div class="abs" style="left:1065px;top:1018px;width:308px;height:16px;background:#f0f0f0"></div><div class="abs" style="left:1082px;top:1019px;width:240px;height:14px;background:#cdcdcd"></div><svg class="abs" style="left:1070px;top:1021px" width="8" height="11"><path d="M6 1.5 L2 5.5 L6 9.5" stroke="#606060" stroke-width="1.5" fill="none"/></svg><svg class="abs" style="left:1344px;top:1021px" width="8" height="11"><path d="M2 1.5 L6 5.5 L2 9.5" stroke="#606060" stroke-width="1.5" fill="none"/></svg><svg class="abs" style="left:1360px;top:1022px" width="10" height="10"><path d="M8 2h1v1h-1zM6 4h1v1h-1zM8 4h1v1h-1zM4 6h1v1h-1zM6 6h1v1h-1zM8 6h1v1h-1z" fill="#a0a0a0"/></svg><div class="abs" style="left:1678px;top:95px;width:239px;height:559px;border-left:1px solid #6a6a6a;border-top:1px solid #6a6a6a;border-bottom:1px solid #6a6a6a;background:#f0f0f0;box-shadow:1px 1px 7px 1px rgba(0,0,0,0.30)"></div><div class="abs" style="left:1679px;top:96px;width:238px;height:25px;background:#fff"></div><div class="abs" style="left:1682px;top:100px;width:16px;height:16px"><svg width="16" height="16" viewBox="0 0 16 16"><rect width="16" height="16" fill="#ffff00"/><path d="M0 4 Q2 0 4 3 T8 3 T12 3 T16 3" stroke="#ff0000" fill="none" stroke-width="1.2"/><path d="M0 8.5 H2 V6 H5 V9 H8 V6 H11 V9 H14 V6 H16" stroke="#00cc00" fill="none" stroke-width="1.2"/><path d="M0 15 L3 11 L6 15 L9 11 L12 15 L15 11 L16 12" stroke="#0000ff" fill="none" stroke-width="1.2"/></svg></div><div class="t" style="left:1703px;top:101px;font-size:12px;color:#999">Signal Gener...</div><div class="abs" style="left:1801px;top:108px;width:10px;height:1px;background:#a0a0a0"></div><div class="abs" style="left:1847px;top:103px;width:10px;height:10px;border:1px solid #e0e0e0"></div><svg class="abs" style="left:1892px;top:103px" width="11" height="11"><path d="M0.5 0.5 L10.5 10.5 M10.5 0.5 L0.5 10.5" stroke="#a0a0a0" stroke-width="1"/></svg><div class="abs" style="left:1684px;top:129px;width:13px;height:13px;background:#fff;border:1px solid #a0a0a0;border-right-color:#fff;border-bottom-color:#fff;box-shadow:inset 1px 1px 0 #696969"></div><svg class="abs" style="left:1686px;top:131px" width="9" height="9"><path d="M1 4 L3.5 6.5 L8 1.5" stroke="#000" stroke-width="2" fill="none"/></svg><div class="t" style="left:1702px;top:130px;font-size:11px;letter-spacing:-0.2px;color:#000;">Show Editor</div><div class="abs" style="left:1765px;top:126px;width:126px;height:20px;background:#fff;border:1px solid #a0a0a0;border-right-color:#fff;border-bottom-color:#fff;box-shadow:inset 1px 1px 0 #696969"></div><div class="abs" style="left:1873px;top:128px;width:16px;height:16px;background:#f0f0f0;border:1px solid #fff;border-right-color:#696969;border-bottom-color:#696969;box-shadow:inset -1px -1px 0 #a0a0a0"></div><div class="abs" style="left:1877px;top:135px;border-left:4px solid transparent;border-right:4px solid transparent;border-top:4px solid #000"></div><div class="abs" style="left:1768px;top:128px;width:104px;height:16px;overflow:hidden"><div class="t" style="left:0;top:2px;font-size:11px;color:#000">No Loopback</div></div><div class="abs" style="left:1894px;top:124px;width:23px;height:23px;background:#f0f0f0;border:1px solid #fff;border-right-color:#696969;border-bottom-color:#696969;box-shadow:inset -1px -1px 0 #a0a0a0"></div><div class="abs" style="left:1901px;top:131px;width:10px;height:10px;background:#00ee00"></div><div class="t" style="left:1683px;top:156px;font-size:11px;letter-spacing:-0.2px;color:#a0a0a0;">Start OSC after (s)</div><div class="abs" style="left:1774px;top:152px;width:67px;height:19px;background:#f0f0f0;border:1px solid #a0a0a0;border-right-color:#fff;border-bottom-color:#fff;box-shadow:inset 1px 1px 0 #696969"></div><div class="t" style="left:1778px;top:156px;font-size:11px;letter-spacing:-0.2px;color:#a0a0a0;">0</div><div class="abs" style="left:1844px;top:155px;width:13px;height:13px;background:#f0f0f0;border:1px solid #a0a0a0;border-right-color:#fff;border-bottom-color:#fff;box-shadow:inset 1px 1px 0 #696969"></div><div class="t" style="left:1862px;top:156px;font-size:11px;letter-spacing:-0.2px;color:#a0a0a0;">Echo Only</div><div class="abs" style="left:1681px;top:185px;width:209px;height:36px;border:1px solid #a0a0a0;box-shadow:1px 1px 0 #fff, inset 1px 1px 0 #fff"></div><div class="abs" style="left:1688px;top:180px;width:102px;height:12px;background:#f0f0f0"></div><div class="t" style="left:1690px;top:180px;font-size:11px;letter-spacing:-0.2px;color:#000;">Sampling Parameters</div><div class="abs" style="left:1687px;top:195px;width:99px;height:19px;background:#fff;border:1px solid #a0a0a0;border-right-color:#fff;border-bottom-color:#fff;box-shadow:inset 1px 1px 0 #696969"></div><div class="abs" style="left:1768px;top:197px;width:16px;height:15px;background:#f0f0f0;border:1px solid #fff;border-right-color:#696969;border-bottom-color:#696969;box-shadow:inset -1px -1px 0 #a0a0a0"></div><div class="abs" style="left:1772px;top:203px;border-left:4px solid transparent;border-right:4px solid transparent;border-top:4px solid #000"></div><div class="abs" style="left:1690px;top:197px;width:77px;height:15px;overflow:hidden"><div class="t" style="left:0;top:2px;font-size:11px;color:#000">48kHz</div></div><div class="abs" style="left:1789px;top:195px;width:43px;height:19px;background:#fff;border:1px solid #a0a0a0;border-right-color:#fff;border-bottom-color:#fff;box-shadow:inset 1px 1px 0 #696969"></div><div class="abs" style="left:1814px;top:197px;width:16px;height:15px;background:#f0f0f0;border:1px solid #fff;border-right-color:#696969;border-bottom-color:#696969;box-shadow:inset -1px -1px 0 #a0a0a0"></div><div class="abs" style="left:1818px;top:203px;border-left:4px solid transparent;border-right:4px solid transparent;border-top:4px solid #000"></div><div class="abs" style="left:1792px;top:197px;width:21px;height:15px;overflow:hidden"><div class="t" style="left:0;top:2px;font-size:11px;color:#000">A&amp;B</div></div><div class="abs" style="left:1835px;top:195px;width:52px;height:19px;background:#fff;border:1px solid #a0a0a0;border-right-color:#fff;border-bottom-color:#fff;box-shadow:inset 1px 1px 0 #696969"></div><div class="abs" style="left:1869px;top:197px;width:16px;height:15px;background:#f0f0f0;border:1px solid #fff;border-right-color:#696969;border-bottom-color:#696969;box-shadow:inset -1px -1px 0 #a0a0a0"></div><div class="abs" style="left:1873px;top:203px;border-left:4px solid transparent;border-right:4px solid transparent;border-top:4px solid #000"></div><div class="abs" style="left:1838px;top:197px;width:30px;height:15px;overflow:hidden"><div class="t" style="left:0;top:2px;font-size:11px;color:#000">24Bit</div></div><div class="abs" style="left:1894px;top:178px;width:23px;height:23px;background:#f0f0f0;border:1px solid #fff;border-right-color:#696969;border-bottom-color:#696969;box-shadow:inset -1px -1px 0 #a0a0a0"></div><svg class="abs" style="left:1898px;top:182px" width="16" height="15"><rect x="1" y="1" width="14" height="13" fill="#808040"/><rect x="4" y="2" width="8" height="5" fill="#e0e0c0"/><rect x="4" y="9" width="8" height="5" fill="#e0e0c0"/><rect x="9" y="10" width="2" height="3" fill="#808040"/></svg><div class="abs" style="left:1894px;top:203px;width:23px;height:22px;background:#f0f0f0;border:1px solid #fff;border-right-color:#696969;border-bottom-color:#696969;box-shadow:inset -1px -1px 0 #a0a0a0"></div><svg class="abs" style="left:1897px;top:206px" width="17" height="16"><path d="M1 4h15M1 7h15M1 10h15M1 13h15" stroke="#909090"/><path d="M4 13 V6 L13 2 V11" stroke="#ff0000" stroke-width="1.5" fill="none"/><circle cx="3.5" cy="14" r="1.6" fill="#ff0000"/><circle cx="12.5" cy="12" r="1.6" fill="#ff0000"/></svg><div class="abs" style="left:1690px;top:232px;width:85px;height:20px;background:#fff;border:1px solid #a0a0a0;border-right-color:#fff;border-bottom-color:#fff;box-shadow:inset 1px 1px 0 #696969"></div><div class="abs" style="left:1757px;top:234px;width:16px;height:16px;background:#f0f0f0;border:1px solid #fff;border-right-color:#696969;border-bottom-color:#696969;box-shadow:inset -1px -1px 0 #a0a0a0"></div><div class="abs" style="left:1761px;top:241px;border-left:4px solid transparent;border-right:4px solid transparent;border-top:4px solid #000"></div><div class="abs" style="left:1693px;top:234px;width:63px;height:16px;overflow:hidden"><div class="t" style="left:0;top:2px;font-size:11px;color:#000">Sine</div></div><div class="abs" style="left:1787px;top:232px;width:23px;height:21px;background:#f0f0f0;border:1px solid #fff;border-right-color:#696969;border-bottom-color:#696969;box-shadow:inset -1px -1px 0 #a0a0a0"></div><div class="t" style="left:1794px;top:238px;font-size:11px;letter-spacing:-0.2px;color:#a0a0a0;">...</div><div class="abs" style="left:1823px;top:232px;width:85px;height:20px;background:#fff;border:1px solid #a0a0a0;border-right-color:#fff;border-bottom-color:#fff;box-shadow:inset 1px 1px 0 #696969"></div><div class="abs" style="left:1890px;top:234px;width:16px;height:16px;background:#f0f0f0;border:1px solid #fff;border-right-color:#696969;border-bottom-color:#696969;box-shadow:inset -1px -1px 0 #a0a0a0"></div><div class="abs" style="left:1894px;top:241px;border-left:4px solid transparent;border-right:4px solid transparent;border-top:4px solid #000"></div><div class="abs" style="left:1826px;top:234px;width:63px;height:16px;overflow:hidden"><div class="t" style="left:0;top:2px;font-size:11px;color:#000">Sine</div></div><div class="abs" style="left:1736px;top:260px;width:13px;height:13px;background:#fff;border:1px solid #a0a0a0;border-right-color:#fff;border-bottom-color:#fff;box-shadow:inset 1px 1px 0 #696969"></div><div class="t" style="left:1755px;top:260px;font-size:11px;letter-spacing:-0.2px;color:#000;">No Spectral Leakage</div><div class="t" style="left:1745px;top:288px;font-size:11px;letter-spacing:-0.2px;color:#000;">Output Frequency (Hz)</div><div class="abs" style="left:1714px;top:306px;width:88px;height:20px;background:#fff;border:1px solid #a0a0a0;border-right-color:#fff;border-bottom-color:#fff;box-shadow:inset 1px 1px 0 #696969"></div><div class="abs" style="left:1784px;top:308px;width:16px;height:16px;background:#f0f0f0;border:1px solid #fff;border-right-color:#696969;border-bottom-color:#696969;box-shadow:inset -1px -1px 0 #a0a0a0"></div><div class="abs" style="left:1788px;top:315px;border-left:4px solid transparent;border-right:4px solid transparent;border-top:4px solid #000"></div><div class="abs" style="left:1717px;top:308px;width:66px;height:16px;overflow:hidden"><div class="t" style="left:0;top:2px;font-size:11px;color:#000">997.55859375</div></div><div class="abs" style="left:1803px;top:306px;width:87px;height:20px;background:#fff;border:1px solid #a0a0a0;border-right-color:#fff;border-bottom-color:#fff;box-shadow:inset 1px 1px 0 #696969"></div><div class="abs" style="left:1872px;top:308px;width:16px;height:16px;background:#f0f0f0;border:1px solid #fff;border-right-color:#696969;border-bottom-color:#696969;box-shadow:inset -1px -1px 0 #a0a0a0"></div><div class="abs" style="left:1876px;top:315px;border-left:4px solid transparent;border-right:4px solid transparent;border-top:4px solid #000"></div><div class="abs" style="left:1806px;top:308px;width:65px;height:16px;overflow:hidden"><div class="t" style="left:0;top:2px;font-size:11px;color:#000">997.55859375</div></div><div class="t" style="left:1748px;top:337px;font-size:11px;letter-spacing:-0.2px;color:#000;">Output Amplitude(Vp)</div><div class="abs" style="left:1714px;top:358px;width:88px;height:20px;background:#fff;border:1px solid #a0a0a0;border-right-color:#fff;border-bottom-color:#fff;box-shadow:inset 1px 1px 0 #696969"></div><div class="abs" style="left:1784px;top:360px;width:16px;height:16px;background:#f0f0f0;border:1px solid #fff;border-right-color:#696969;border-bottom-color:#696969;box-shadow:inset -1px -1px 0 #a0a0a0"></div><div class="abs" style="left:1788px;top:367px;border-left:4px solid transparent;border-right:4px solid transparent;border-top:4px solid #000"></div><div class="abs" style="left:1717px;top:360px;width:66px;height:16px;overflow:hidden"><div class="t" style="left:0;top:2px;font-size:11px;color:#000">0.75</div></div><div class="abs" style="left:1803px;top:358px;width:87px;height:20px;background:#fff;border:1px solid #a0a0a0;border-right-color:#fff;border-bottom-color:#fff;box-shadow:inset 1px 1px 0 #696969"></div><div class="abs" style="left:1872px;top:360px;width:16px;height:16px;background:#f0f0f0;border:1px solid #fff;border-right-color:#696969;border-bottom-color:#696969;box-shadow:inset -1px -1px 0 #a0a0a0"></div><div class="abs" style="left:1876px;top:367px;border-left:4px solid transparent;border-right:4px solid transparent;border-top:4px solid #000"></div><div class="abs" style="left:1806px;top:360px;width:65px;height:16px;overflow:hidden"><div class="t" style="left:0;top:2px;font-size:11px;color:#000">0.75</div></div><div class="t" style="left:1718px;top:389px;font-size:11px;letter-spacing:-0.2px;color:#000;">Output Phase Difference (Degree)</div><div class="abs" style="left:1762px;top:410px;width:74px;height:19px;background:#fff;border:1px solid #a0a0a0;border-right-color:#fff;border-bottom-color:#fff;box-shadow:inset 1px 1px 0 #696969"></div><div class="abs" style="left:1818px;top:412px;width:16px;height:15px;background:#f0f0f0;border:1px solid #fff;border-right-color:#696969;border-bottom-color:#696969;box-shadow:inset -1px -1px 0 #a0a0a0"></div><div class="abs" style="left:1822px;top:418px;border-left:4px solid transparent;border-right:4px solid transparent;border-top:4px solid #000"></div><div class="abs" style="left:1765px;top:412px;width:52px;height:15px;overflow:hidden"><div class="t" style="left:0;top:2px;font-size:11px;color:#000">0</div></div><div class="abs" style="left:1687px;top:295px;width:3px;height:134px;border:1px solid #a0a0a0;border-right-color:#fff;border-bottom-color:#fff;background:#e0e0e0"></div><div class="abs" style="left:1683px;top:419px;width:11px;height:5px;background:#f0f0f0;border:1px solid #fff;border-right-color:#696969;border-bottom-color:#696969"></div><div class="abs" style="left:1702px;top:295px;width:3px;height:134px;border:1px solid #a0a0a0;border-right-color:#fff;border-bottom-color:#fff;background:#e0e0e0"></div><div class="abs" style="left:1698px;top:328px;width:11px;height:5px;background:#f0f0f0;border:1px solid #fff;border-right-color:#696969;border-bottom-color:#696969"></div><div class="abs" style="left:1896px;top:295px;width:3px;height:134px;border:1px solid #a0a0a0;border-right-color:#fff;border-bottom-color:#fff;background:#e0e0e0"></div><div class="abs" style="left:1892px;top:328px;width:11px;height:5px;background:#f0f0f0;border:1px solid #fff;border-right-color:#696969;border-bottom-color:#696969"></div><div class="abs" style="left:1909px;top:295px;width:3px;height:134px;border:1px solid #a0a0a0;border-right-color:#fff;border-bottom-color:#fff;background:#e0e0e0"></div><div class="abs" style="left:1905px;top:419px;width:11px;height:5px;background:#f0f0f0;border:1px solid #fff;border-right-color:#696969;border-bottom-color:#696969"></div><div class="t" style="left:1682px;top:434px;font-size:11px;letter-spacing:-0.2px;color:#000;">-2.5dBFS</div><div class="t" style="left:1871px;top:434px;font-size:11px;letter-spacing:-0.2px;color:#000;">-2.5dBFS</div><div class="abs" style="left:1737px;top:438px;width:121px;height:3px;border:1px solid #a0a0a0;border-right-color:#fff;border-bottom-color:#fff;background:#e0e0e0"></div><div class="abs" style="left:1796px;top:434px;width:5px;height:11px;background:#f0f0f0;border:1px solid #fff;border-right-color:#696969;border-bottom-color:#696969"></div><div class="abs" style="left:1681px;top:452px;width:233px;height:47px;border:1px solid #a0a0a0;box-shadow:1px 1px 0 #fff, inset 1px 1px 0 #fff"></div><div class="abs" style="left:1688px;top:458px;width:13px;height:13px;background:#fff;border:1px solid #a0a0a0;border-right-color:#fff;border-bottom-color:#fff;box-shadow:inset 1px 1px 0 #696969"></div><div class="t" style="left:1706px;top:459px;font-size:11px;letter-spacing:-0.2px;color:#000;">Mask</div><div class="abs" style="left:1751px;top:457px;width:16px;height:14px;background:#f0f0f0;border:1px solid #fff;border-right-color:#696969;border-bottom-color:#696969;box-shadow:inset -1px -1px 0 #a0a0a0"></div><div class="t" style="left:1754px;top:459px;font-size:9px;letter-spacing:-0.2px;color:#a0a0a0;">...</div><div class="t" style="left:1787px;top:460px;font-size:11px;letter-spacing:-0.2px;color:#a0a0a0;">On (s)</div><div class="t" style="left:1862px;top:460px;font-size:11px;letter-spacing:-0.2px;color:#a0a0a0;">Off (s)</div><div class="abs" style="left:1688px;top:478px;width:13px;height:13px;background:#f0f0f0;border:1px solid #a0a0a0;border-right-color:#fff;border-bottom-color:#fff;box-shadow:inset 1px 1px 0 #696969"></div><svg class="abs" style="left:1690px;top:480px" width="9" height="9"><path d="M1 4 L3.5 6.5 L8 1.5" stroke="#a0a0a0" stroke-width="2" fill="none"/></svg><div class="t" style="left:1707px;top:479px;font-size:11px;letter-spacing:-0.2px;color:#a0a0a0;">Phase Lock</div><div class="abs" style="left:1774px;top:475px;width:66px;height:20px;background:#f0f0f0;border:1px solid #a0a0a0;border-right-color:#fff;border-bottom-color:#fff;box-shadow:inset 1px 1px 0 #696969"></div><div class="t" style="left:1777px;top:479px;font-size:11px;letter-spacing:-0.2px;color:#a0a0a0;">1</div><div class="abs" style="left:1847px;top:475px;width:65px;height:20px;background:#f0f0f0;border:1px solid #a0a0a0;border-right-color:#fff;border-bottom-color:#fff;box-shadow:inset 1px 1px 0 #696969"></div><div class="t" style="left:1850px;top:479px;font-size:11px;letter-spacing:-0.2px;color:#a0a0a0;">0</div><div class="abs" style="left:1681px;top:504px;width:233px;height:45px;border:1px solid #a0a0a0;box-shadow:1px 1px 0 #fff, inset 1px 1px 0 #fff"></div><div class="abs" style="left:1688px;top:518px;width:13px;height:13px;background:#fff;border:1px solid #a0a0a0;border-right-color:#fff;border-bottom-color:#fff;box-shadow:inset 1px 1px 0 #696969"></div><div class="t" style="left:1706px;top:519px;font-size:11px;letter-spacing:-0.2px;color:#000;">Fade</div><div class="t" style="left:1787px;top:510px;font-size:11px;letter-spacing:-0.2px;color:#a0a0a0;">In (s)</div><div class="t" style="left:1862px;top:510px;font-size:11px;letter-spacing:-0.2px;color:#a0a0a0;">Out (s)</div><div class="abs" style="left:1774px;top:526px;width:66px;height:20px;background:#f0f0f0;border:1px solid #a0a0a0;border-right-color:#fff;border-bottom-color:#fff;box-shadow:inset 1px 1px 0 #696969"></div><div class="t" style="left:1777px;top:530px;font-size:11px;letter-spacing:-0.2px;color:#a0a0a0;">0.01</div><div class="abs" style="left:1847px;top:526px;width:65px;height:20px;background:#f0f0f0;border:1px solid #a0a0a0;border-right-color:#fff;border-bottom-color:#fff;box-shadow:inset 1px 1px 0 #696969"></div><div class="t" style="left:1850px;top:530px;font-size:11px;letter-spacing:-0.2px;color:#a0a0a0;">0.01</div><div class="abs" style="left:1681px;top:556px;width:233px;height:45px;border:1px solid #a0a0a0;box-shadow:1px 1px 0 #fff, inset 1px 1px 0 #fff"></div><div class="t" style="left:1684px;top:559px;font-size:11px;letter-spacing:-0.2px;color:#000;">Modulation</div><div class="t" style="left:1758px;top:559px;font-size:11px;letter-spacing:-0.2px;color:#a0a0a0;">Carrier (Hz)</div><div class="t" style="left:1833px;top:559px;font-size:11px;letter-spacing:-0.2px;color:#a0a0a0;">Mod. Index (%)</div><div class="abs" style="left:1685px;top:577px;width:56px;height:19px;background:#fff;border:1px solid #a0a0a0;border-right-color:#fff;border-bottom-color:#fff;box-shadow:inset 1px 1px 0 #696969"></div><div class="abs" style="left:1723px;top:579px;width:16px;height:15px;background:#f0f0f0;border:1px solid #fff;border-right-color:#696969;border-bottom-color:#696969;box-shadow:inset -1px -1px 0 #a0a0a0"></div><div class="abs" style="left:1727px;top:585px;border-left:4px solid transparent;border-right:4px solid transparent;border-top:4px solid #000"></div><div class="abs" style="left:1688px;top:579px;width:34px;height:15px;overflow:hidden"><div class="t" style="left:0;top:2px;font-size:11px;color:#000">NIL</div></div><div class="abs" style="left:1758px;top:577px;width:65px;height:19px;background:#f0f0f0;border:1px solid #a0a0a0;border-right-color:#fff;border-bottom-color:#fff;box-shadow:inset 1px 1px 0 #696969"></div><div class="t" style="left:1761px;top:581px;font-size:11px;letter-spacing:-0.2px;color:#a0a0a0;">0</div><div class="abs" style="left:1838px;top:577px;width:65px;height:19px;background:#f0f0f0;border:1px solid #a0a0a0;border-right-color:#fff;border-bottom-color:#fff;box-shadow:inset 1px 1px 0 #696969"></div><div class="t" style="left:1841px;top:581px;font-size:11px;letter-spacing:-0.2px;color:#a0a0a0;">0</div><div class="t" style="left:1681px;top:610px;font-size:11px;letter-spacing:-0.2px;color:#000;">Duration (s)</div><div class="abs" style="left:1745px;top:607px;width:66px;height:19px;background:#f0f0f0;border:1px solid #a0a0a0;border-right-color:#fff;border-bottom-color:#fff;box-shadow:inset 1px 1px 0 #696969"></div><div class="t" style="left:1749px;top:611px;font-size:11px;letter-spacing:-0.2px;color:#a0a0a0;">1</div><div class="abs" style="left:1817px;top:611px;width:13px;height:13px;background:#fff;border:1px solid #a0a0a0;border-right-color:#fff;border-bottom-color:#fff;box-shadow:inset 1px 1px 0 #696969"></div><svg class="abs" style="left:1819px;top:613px" width="9" height="9"><path d="M1 4 L3.5 6.5 L8 1.5" stroke="#000" stroke-width="2" fill="none"/></svg><div class="t" style="left:1835px;top:611px;font-size:11px;letter-spacing:-0.2px;color:#000;">Loop</div><div class="abs" style="left:1873px;top:611px;width:13px;height:13px;background:#f0f0f0;border:1px solid #a0a0a0;border-right-color:#fff;border-bottom-color:#fff;box-shadow:inset 1px 1px 0 #696969"></div><div class="t" style="left:1891px;top:611px;font-size:11px;letter-spacing:-0.2px;color:#a0a0a0;">DDS</div><div class="abs" style="left:1682px;top:634px;width:13px;height:13px;background:#fff;border:1px solid #a0a0a0;border-right-color:#fff;border-bottom-color:#fff;box-shadow:inset 1px 1px 0 #696969"></div><div class="t" style="left:1700px;top:635px;font-size:11px;letter-spacing:-0.2px;color:#000;">Sweep</div><div class="abs" style="left:1758px;top:634px;width:12px;height:12px;border-radius:50%;border:1px solid #a0a0a0;background:#f0f0f0"></div><div class="abs" style="left:1762px;top:638px;width:4px;height:4px;border-radius:50%;background:#a0a0a0"></div><div class="t" style="left:1775px;top:635px;font-size:11px;letter-spacing:-0.2px;color:#a0a0a0;">Frequency</div><div class="abs" style="left:1839px;top:634px;width:12px;height:12px;border-radius:50%;border:1px solid #a0a0a0;background:#f0f0f0"></div><div class="t" style="left:1856px;top:635px;font-size:11px;letter-spacing:-0.2px;color:#a0a0a0;">Amplitude</div><div class="abs" style="left:0;top:1055px;width:1920px;height:25px;background:#f0f0f0;border-top:1px solid #fff"></div><div class="abs" style="left:0;top:1078px;width:1920px;height:2px;background:#3c3c3c"></div><div class="abs" style="left:3px;top:1057px;width:2px;height:21px;border-left:1px solid #a0a0a0;border-right:1px solid #fff"></div><div class="abs" style="left:7px;top:1057px;width:24px;height:21px;background:#f2f2f2;border-left:1px solid #fff;border-top:1px solid #fff"></div><div class="t b" style="left:7px;width:24px;text-align:center;top:1061px;font-size:15px;color:#000">F</div><div class="cb" style="left:31px;top:1057px;width:150px;height:21px;background:#fff"><div class="cbt" style="color:#000;font-weight:bold;font-size:13px">Auto</div><div class="arr"></div></div><div class="cb" style="left:183px;top:1057px;width:118px;height:21px;background:#fff"><div class="cbt" style="color:#000;font-weight:bold;font-size:13px">&times;1</div><div class="arr"></div></div><div class="abs" style="left:303px;top:1057px;width:21px;height:21px;background:#f2f2f2;border-left:1px solid #fff;border-top:1px solid #fff"></div><div class="t b" style="left:303px;width:21px;text-align:center;top:1061px;font-size:15px;color:#000">A</div><div class="cb" style="left:324px;top:1057px;width:153px;height:21px;background:#dcdcdc"><div class="cbt" style="color:#000;font-weight:bold;font-size:13px">-200dB</div><div class="arr"></div></div><div class="cb" style="left:479px;top:1057px;width:109px;height:21px;background:#dcdcdc"><div class="cbt" style="color:#000;font-weight:bold;font-size:13px">Off</div><div class="arr"></div></div><div class="abs" style="left:590px;top:1057px;width:24px;height:21px;background:#f2f2f2;border-left:1px solid #fff;border-top:1px solid #fff"></div><div class="t b" style="left:590px;width:24px;text-align:center;top:1061px;font-size:15px;color:#000">M</div><div class="cb" style="left:614px;top:1057px;width:308px;height:21px;background:#fff"><div class="cbt" style="color:#000;font-weight:bold;font-size:13px">Amplitude Spectrum</div><div class="arr"></div></div><div class="abs" style="left:924px;top:1057px;width:20px;height:21px;background:#f2f2f2;border-left:1px solid #fff;border-top:1px solid #fff"></div><div class="t b" style="left:924px;width:20px;text-align:center;top:1061px;font-size:15px;color:#a0a0a0">B</div><div class="cb" style="left:945px;top:1057px;width:153px;height:21px;background:#dcdcdc"><div class="cbt" style="color:#787878;font-weight:bold;font-size:13px">Off</div><div class="arr dis"></div></div><div class="cb" style="left:1100px;top:1057px;width:109px;height:21px;background:#dcdcdc"><div class="cbt" style="color:#787878;font-weight:bold;font-size:13px">Off</div><div class="arr dis"></div></div><div class="abs" style="left:1211px;top:1057px;width:44px;height:21px;background:#f2f2f2;border-left:1px solid #fff;border-top:1px solid #fff"></div><div class="t b" style="left:1211px;width:44px;text-align:center;top:1061px;font-size:15px;color:#000">FFT</div><div class="cb" style="left:1256px;top:1057px;width:157px;height:21px;background:#fff"><div class="cbt" style="color:#000;font-weight:bold;font-size:13px">32768</div><div class="arr"></div></div><div class="abs" style="left:1415px;top:1057px;width:72px;height:21px;background:#f2f2f2;border-left:1px solid #fff;border-top:1px solid #fff"></div><div class="t b" style="left:1415px;width:72px;text-align:center;top:1061px;font-size:15px;color:#000">WND</div><div class="cb" style="left:1488px;top:1057px;width:271px;height:21px;background:#fff"><div class="cbt" style="color:#000;font-weight:bold;font-size:13px">Dolph-Chebyshev 200</div><div class="arr"></div></div><div class="cb" style="left:1761px;top:1057px;width:157px;height:21px;background:#fff"><div class="cbt" style="color:#000;font-weight:bold;font-size:13px">0%</div><div class="arr"></div></div><svg class="abs" style="left:1603px;top:498px" width="14" height="22"><path d="M1 1 V17 L4.5 13.5 L7.5 20 L10 19 L7 12.5 H12Z" fill="#fff" stroke="#000" stroke-width="1"/></svg></body></html>
